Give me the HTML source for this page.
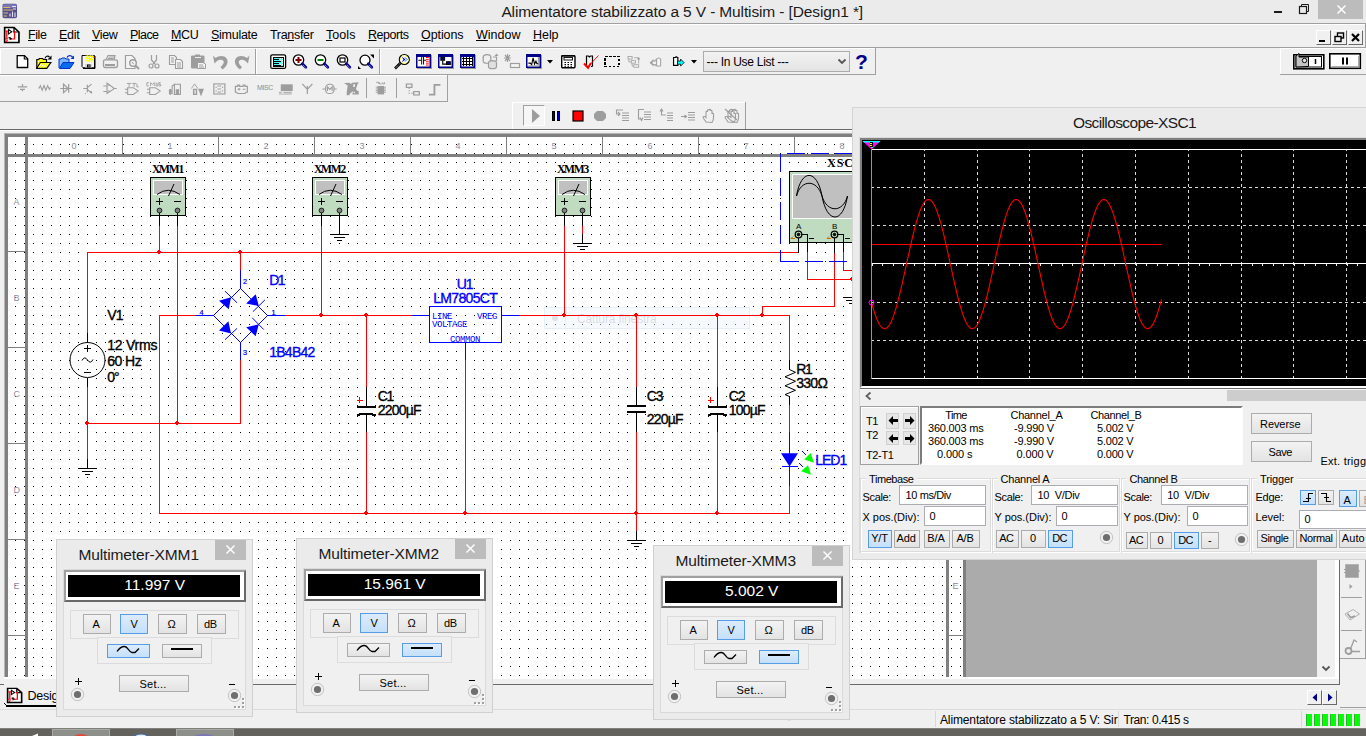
<!DOCTYPE html>
<html lang="en"><head><meta charset="utf-8"><title>Alimentatore stabilizzato a 5 V - Multisim - [Design1 *]</title>
<style>
html,body{margin:0;padding:0;}
body{width:1366px;height:736px;overflow:hidden;background:#f0f0f0;position:relative;font-family:"Liberation Sans",sans-serif;}
#root{position:absolute;left:0;top:0;width:1366px;height:736px;overflow:hidden;}
#root div,#root svg.a,.t{position:absolute;box-sizing:border-box;}
.t{white-space:pre;margin:0;}
u{text-decoration:underline;text-underline-offset:1px;}
.sec{position:absolute;left:0;top:0;width:1366px;height:736px;display:block;}
#root .sec{pointer-events:none;}

.b3{border:1px solid;border-color:#fff #696969 #696969 #fff;background:#f0f0f0;}

.grid{background-color:#fff;background-image:repeating-linear-gradient(to right,transparent 0,transparent 1px,#fff 1px,#fff 9px),repeating-linear-gradient(to bottom,#000 0,#000 1px,#fff 1px,#fff 9px);}
.sch{-webkit-text-stroke:0.25px currentColor;}

.btn{border:1px solid #acacac;background:linear-gradient(#f3f3f3,#e3e3e3);}
.btn.sel{border-color:#569de5;background:linear-gradient(#dcecfc,#c4e0fa);}
.inp{border:1px solid #abadb3;background:#fff;}
.grp{border:1px solid #dcdcdc;box-shadow:inset 1px 1px 0 #fff,1px 1px 0 #fff;}

</style></head>
<body>
<div id="root">
<header class="sec" id="app-chrome" aria-label="Title bar, menu bar and toolbars">
<div style="left:0px;top:0px;width:1366px;height:23px;background:#ebebeb;"></div>
<svg class="a" style="left:2px;top:3px" width="18" height="17" viewBox="0 0 18 17" ><rect x="0.500" y="0.800" width="14.500" height="14.500" rx="1.800" fill="#54508e"/><rect x="1" y="1.200" width="13.500" height="4" rx="1.500" fill="#7a78b4"/><path d="M1.500,4.500H8M1.500,7H11M1.500,10H6M1.500,13H5" stroke="#e0b868" stroke-width="1"/><path d="M8,13.500V10.500M10.500,14V8.500M13,14V9.500M10,3.500H14M11,6H14" stroke="#e4e0f0" stroke-width="1.100"/></svg>
<span class="t" style="left:501.4px;top:1.50px;font:normal 15.5px/20px 'Liberation Sans',sans-serif;color:#1a1a1a;letter-spacing:-0.127px;">Alimentatore stabilizzato a 5 V - Multisim - [Design1 *]</span>
<div style="left:1274px;top:11px;width:8px;height:2px;background:#1a1a1a;"></div>
<svg class="a" style="left:1298px;top:3px" width="13" height="13" viewBox="0 0 13 13" ><path d="M3.500,3.500V1.500H10.500V8.500H8.500" fill="none" stroke="#1a1a1a" stroke-width="1"/><rect x="1.500" y="3.500" width="7" height="7" fill="none" stroke="#1a1a1a" stroke-width="1.200"/></svg>
<div style="left:1318px;top:0px;width:45px;height:19px;background:#bcbcbc;"></div>
<svg class="a" style="left:1336px;top:4px" width="11" height="11" viewBox="0 0 11 11" ><path d="M1.500,1.500L9.500,9.500M9.500,1.500L1.500,9.500" stroke="#fff" stroke-width="1.500"/></svg>
<div style="left:0px;top:23px;width:1366px;height:1px;background:#a0a0a0;"></div>
<div style="left:0px;top:24px;width:1366px;height:1px;background:#fff;"></div>
<div style="left:0px;top:47px;width:1366px;height:1px;background:#a0a0a0;"></div>
<svg class="a" style="left:3px;top:26px" width="18" height="18" viewBox="0 0 18 18" ><g transform="scale(1.100,1)"><path d="M1.500,1.500H10L14.500,6V16.500H1.500Z" fill="#fff" stroke="#000" stroke-width="1.500"/><path d="M10,1.500V6H14.500" fill="none" stroke="#000" stroke-width="1.200"/><path d="M2,5H5M9,6H10.500V13H7M3.500,5V13M2,13H4.500M3,16L4,14" stroke="#f00" stroke-width="1.200" fill="none"/><path d="M5,3.500V8L8,5.800ZM5,11.500L8,13M6.500,11V14" stroke="#000" stroke-width="1" fill="#fff"/></g></svg>
<span class="t" style="left:28px;top:27.00px;font:normal 12.5px/16px 'Liberation Sans',sans-serif;color:#000;letter-spacing:-0.410px;"><u>F</u>ile</span>
<span class="t" style="left:59px;top:27.00px;font:normal 12.5px/16px 'Liberation Sans',sans-serif;color:#000;letter-spacing:-0.260px;"><u>E</u>dit</span>
<span class="t" style="left:92px;top:27.00px;font:normal 12.5px/16px 'Liberation Sans',sans-serif;color:#000;letter-spacing:-0.342px;"><u>V</u>iew</span>
<span class="t" style="left:130px;top:27.00px;font:normal 12.5px/16px 'Liberation Sans',sans-serif;color:#000;letter-spacing:-0.554px;"><u>P</u>lace</span>
<span class="t" style="left:171px;top:27.00px;font:normal 12.5px/16px 'Liberation Sans',sans-serif;color:#000;letter-spacing:-0.322px;"><u>M</u>CU</span>
<span class="t" style="left:211px;top:27.00px;font:normal 12.5px/16px 'Liberation Sans',sans-serif;color:#000;letter-spacing:-0.267px;"><u>S</u>imulate</span>
<span class="t" style="left:270px;top:27.00px;font:normal 12.5px/16px 'Liberation Sans',sans-serif;color:#000;letter-spacing:-0.322px;">Tra<u>n</u>sfer</span>
<span class="t" style="left:326px;top:27.00px;font:normal 12.5px/16px 'Liberation Sans',sans-serif;color:#000;letter-spacing:0.064px;"><u>T</u>ools</span>
<span class="t" style="left:368px;top:27.00px;font:normal 12.5px/16px 'Liberation Sans',sans-serif;color:#000;letter-spacing:-0.467px;"><u>R</u>eports</span>
<span class="t" style="left:421px;top:27.00px;font:normal 12.5px/16px 'Liberation Sans',sans-serif;color:#000;letter-spacing:-0.083px;"><u>O</u>ptions</span>
<span class="t" style="left:476px;top:27.00px;font:normal 12.5px/16px 'Liberation Sans',sans-serif;color:#000;letter-spacing:0.007px;"><u>W</u>indow</span>
<span class="t" style="left:533px;top:27.00px;font:normal 12.5px/16px 'Liberation Sans',sans-serif;color:#000;letter-spacing:-0.052px;"><u>H</u>elp</span>
<div class="b3" style="left:1316px;top:30px;width:15px;height:15px;"></div>
<div class="b3" style="left:1332px;top:30px;width:15px;height:15px;"></div>
<div class="b3" style="left:1348px;top:30px;width:15px;height:15px;"></div>
<div style="left:1319px;top:40px;width:6px;height:2px;background:#000;"></div>
<svg class="a" style="left:1334px;top:32px" width="12" height="12" viewBox="0 0 12 12" ><rect x="3.500" y="1" width="6" height="5" fill="none" stroke="#000" stroke-width="1.400"/><rect x="1" y="4.500" width="6" height="5" fill="#f0f0f0" stroke="#000" stroke-width="1.400"/></svg>
<svg class="a" style="left:1350px;top:32px" width="12" height="12" viewBox="0 0 12 12" ><path d="M2,2L9,9M9,2L2,9" stroke="#000" stroke-width="2.200"/></svg>
<div style="left:1365px;top:24px;width:1px;height:24px;background:#a0a0a0;"></div>
<div style="left:0px;top:48px;width:875px;height:1px;background:#fff;"></div>
<div style="left:0px;top:74px;width:876px;height:1px;background:#a0a0a0;"></div>
<div style="left:875px;top:48px;width:1px;height:27px;background:#a0a0a0;"></div>
<div style="left:0px;top:48px;width:1px;height:26px;background:#fff;"></div>
<div style="left:255px;top:49px;width:1px;height:25px;background:#a0a0a0;"></div>
<div style="left:256px;top:49px;width:1px;height:25px;background:#fff;"></div>
<div style="left:379px;top:49px;width:1px;height:25px;background:#a0a0a0;"></div>
<div style="left:380px;top:49px;width:1px;height:25px;background:#fff;"></div>
<svg class="a" style="left:14px;top:53px" width="17" height="17" viewBox="0 0 17 17"><path d="M3.200,2.600H10.500L13.700,5.800V14.500H3.200Z" fill="#fff" stroke="#000" stroke-width="1.300"/><path d="M10.300,2.600V6H13.700" fill="none" stroke="#000" stroke-width="1.1" /></svg>
<svg class="a" style="left:36px;top:53px" width="17" height="17" viewBox="0 0 17 17"><path d="M0.800,15.300V6.500H2.500L3.500,5.500H6.500L7.500,6.500H10.500V9" fill="#ff0" stroke="#000" stroke-width="1.200"/><path d="M0.800,15.300L4.300,9.500H14.800L10.800,15.300Z" fill="#ff0" stroke="#000" stroke-width="1.200"/><path d="M2.500,14.500L5.500,10.500M5,14.500L8,10.500M7.500,14.500L10.500,10.500M2,9L4,7" stroke="#fff" stroke-width="1" fill="none"/><path d="M9,5.500C9.500,3 12,2.500 13.500,4" fill="none" stroke="#000" stroke-width="1.2" /><path d="M11.500,6.500H15.500V2.500Z" fill="#000" /></svg>
<svg class="a" style="left:58px;top:53px" width="17" height="17" viewBox="0 0 17 17"><path d="M1,15V6H3L4,5H7L8,6H11V9" fill="#7ab8ff" stroke="#0032c8" stroke-width="1"/><path d="M1.5,15.5L5,9.5H16L12,15.5Z" fill="#0a6cf0" stroke="#0032c8" stroke-width="1"/><path d="M9,4.5C10,2 13,2 14.5,4" fill="none" stroke="#0032c8" stroke-width="1.3" /><path d="M12.5,6H16V2.5Z" fill="#0032c8" /></svg>
<svg class="a" style="left:80px;top:53px" width="17" height="17" viewBox="0 0 17 17"><path d="M2,2.500H14.500V15H3.500L2,13.500Z" fill="#f4f4f4" stroke="#000" stroke-width="1"/><rect x="14" y="3" width="1.5" height="12.5" fill="#000"/><rect x="3" y="14.5" width="12" height="1.5" fill="#000"/><rect x="5.5" y="2.5" width="8" height="6" fill="#ff0"/><path d="M5.500,4.500L7.500,2.500M5.500,7.500L10.500,2.500M6.500,8.500L12.500,2.500M9.500,8.500L13.500,4.500M12,8.500L13.500,7" stroke="#fff" stroke-width="0.900"/><rect x="5" y="11" width="7" height="3.5" fill="#d8d8d8"/><rect x="7" y="11.5" width="3.5" height="3" fill="#000"/><rect x="8.5" y="12" width="1" height="2" fill="#c0c0c0"/><rect x="13.5" y="3.5" width="1" height="1.5" fill="#f00"/></svg>
<svg class="a" style="left:102px;top:53px" width="17" height="17" viewBox="0 0 17 17"><path d="M4,7L6,2.5H13L12,7Z" fill="#f4f4f4" stroke="#9d9d9d" stroke-width="1.2"/><path d="M1.5,8C1.5,7 2,6.8 3,6.8H13.5C15,6.8 15.5,7.5 15.5,8.5V12.5C15.5,13.5 15,14.5 13.5,14.5H3C2,14.5 1.5,13.5 1.5,12.5Z" fill="#f0f0f0" stroke="#9d9d9d" stroke-width="1.3"/><rect x="3" y="11" width="10" height="2" fill="#9d9d9d"/><path d="M6.5,4H12M6,5.5H11.5" fill="none" stroke="#9d9d9d" stroke-width="1" /></svg>
<svg class="a" style="left:124px;top:53px" width="17" height="17" viewBox="0 0 17 17"><path d="M1.5,2.5H8L11,5.5V15.5H1.5Z" fill="#f4f4f4" stroke="#9d9d9d" stroke-width="1.2"/><circle cx="9" cy="10" r="3.3" fill="#f0f0f0" stroke="#9d9d9d" stroke-width="1.4"/><path d="M11.5,12.5L15,16" fill="none" stroke="#9d9d9d" stroke-width="2" /><path d="M8,9L9.5,11" fill="none" stroke="#9d9d9d" stroke-width="1" /></svg>
<svg class="a" style="left:146px;top:53px" width="17" height="17" viewBox="0 0 17 17"><path d="M5.5,2V7L9,11M10.5,2V7L7,11" fill="none" stroke="#9d9d9d" stroke-width="1.2" /><circle cx="5" cy="13" r="2" fill="none" stroke="#9d9d9d" stroke-width="1.2"/><circle cx="11" cy="13" r="2" fill="none" stroke="#9d9d9d" stroke-width="1.2"/></svg>
<svg class="a" style="left:168px;top:53px" width="17" height="17" viewBox="0 0 17 17"><path d="M1.5,2.5H6.5L8.5,4.5V11.5H1.5Z" fill="#f4f4f4" stroke="#9d9d9d" stroke-width="1.1"/><path d="M7.5,6.5H12.5L14.5,8.5V15.5H7.5Z" fill="#f4f4f4" stroke="#9d9d9d" stroke-width="1.1"/><path d="M3,5H6M3,7H6M3,9H6M9,10H13M9,12H13M9,14H13" fill="none" stroke="#9d9d9d" stroke-width="1" /></svg>
<svg class="a" style="left:190px;top:53px" width="17" height="17" viewBox="0 0 17 17"><path d="M1,4C1,3 1.5,2.5 2.5,2.5H5V1.5H10V2.5H13C14,2.5 14.5,3 14.5,4V14C14.5,15 14,15.5 13,15.5H2.5C1.5,15.5 1,15 1,14Z" fill="#9d9d9d" /><rect x="5" y="4" width="6" height="1" fill="#f0f0f0"/><path d="M7.5,9.5H13L15.5,11V15.5H7.5Z" fill="#f4f4f4" stroke="#9d9d9d" stroke-width="1"/><path d="M9,12H13M9,14H14" fill="none" stroke="#9d9d9d" stroke-width="1" /></svg>
<svg class="a" style="left:212px;top:53px" width="17" height="17" viewBox="0 0 17 17"><path d="M1,2.5L2.5,10.5L4.8,8.3C6.5,6.5 10,6.2 11.5,8C12.5,9.5 11,12 8.5,14L10.5,16.5C15,13.5 17,8.5 14.5,5.2C12,2 6.5,2.5 3.5,5Z" fill="#9d9d9d" /></svg>
<svg class="a" style="left:234px;top:53px" width="17" height="17" viewBox="0 0 17 17"><path d="M15.5,2.5L14,10.5L11.7,8.3C10,6.5 6.5,6.2 5,8C4,9.5 5.5,12 8,14L6,16.5C1.5,13.5 -0.5,8.5 2,5.2C4.500,2 10,2.5 13,5Z" fill="#9d9d9d" /></svg>
<svg class="a" style="left:270px;top:53px" width="17" height="17" viewBox="0 0 17 17"><rect x="0.8" y="1.8" width="14.8" height="13.6" rx="1.5" fill="#fff" stroke="#000" stroke-width="1.3"/><rect x="3" y="4" width="11" height="10" fill="#000"/><rect x="4" y="5" width="9" height="8" fill="#5ff"/><path d="M4,6.5H9M4,8.5H11M4,10.5H9M4,12.5H11" stroke="#000" stroke-width="1" shape-rendering="crispEdges"/><path d="M10,5.5H13M10,7.5H13M12,9.5H13M10,11.5H13" stroke="#fff" stroke-width="1" stroke-dasharray="1 1"/></svg>
<svg class="a" style="left:292px;top:53px" width="17" height="17" viewBox="0 0 17 17"><circle cx="6.5" cy="7" r="5.2" fill="#fff" stroke="#000" stroke-width="1.3"/><rect x="5.5" y="4" width="2" height="6" fill="#800000"/><rect x="3.5" y="6" width="6" height="2" fill="#800000"/><path d="M10.300,10.800L13.800,14.300" stroke="#0a0a8c" stroke-width="2.800" stroke-linecap="round"/><path d="M11.300,12.400L12.100,13.200M12.600,13.700L13.200,14.300" stroke="#fff" stroke-width="0.800"/></svg>
<svg class="a" style="left:314px;top:53px" width="17" height="17" viewBox="0 0 17 17"><circle cx="6.5" cy="7" r="5.2" fill="#fff" stroke="#000" stroke-width="1.3"/><rect x="3.5" y="6" width="6" height="2" fill="#008000"/><path d="M10.300,10.800L13.800,14.300" stroke="#0a0a8c" stroke-width="2.800" stroke-linecap="round"/><path d="M11.300,12.400L12.100,13.200M12.600,13.700L13.200,14.300" stroke="#fff" stroke-width="0.800"/></svg>
<svg class="a" style="left:336px;top:53px" width="17" height="17" viewBox="0 0 17 17"><circle cx="6.5" cy="7" r="5.2" fill="#fff" stroke="#000" stroke-width="1.3"/><rect x="4" y="5" width="5" height="4" fill="#fff" stroke="#000" stroke-width="1.2"/><path d="M10.300,10.800L13.800,14.300" stroke="#0a0a8c" stroke-width="2.800" stroke-linecap="round"/><path d="M11.300,12.400L12.100,13.200M12.600,13.700L13.200,14.300" stroke="#fff" stroke-width="0.800"/></svg>
<svg class="a" style="left:358px;top:53px" width="17" height="17" viewBox="0 0 17 17"><circle cx="7" cy="7.2" r="5" fill="#fff" stroke="#000" stroke-width="1.3"/><path d="M10.300,10.800L13.800,14.300" stroke="#0a0a8c" stroke-width="2.800" stroke-linecap="round"/><path d="M11.300,12.400L12.100,13.200M12.600,13.700L13.200,14.300" stroke="#fff" stroke-width="0.800"/><path d="M12,1.5H16V5.5Z" fill="#000" /><path d="M0,13V16H3Z" fill="#000" /></svg>
<svg class="a" style="left:394px;top:53px" width="17" height="17" viewBox="0 0 17 17"><path d="M1,15.5L6.5,10" stroke="#000" stroke-width="2.6"/><path d="M1.3,15.2L6.2,10.3" stroke="#fff" stroke-width="0.9" stroke-dasharray="1 1"/><circle cx="10.3" cy="6.5" r="5" fill="#fff" stroke="#000" stroke-width="1.2"/><circle cx="10.3" cy="6.5" r="4" fill="none" stroke="#ff0" stroke-width="1" stroke-dasharray="2 2"/><path d="M7.5,3.5L11.5,6.5L7.5,9.5L9.5,6.5Z" fill="#00c" /><path d="M11,4.5L13,6.5L11,8.5" fill="none" stroke="#06f" stroke-width="1" /></svg>
<svg class="a" style="left:416px;top:53px" width="17" height="17" viewBox="0 0 17 17"><rect x="1" y="2" width="15" height="14" fill="#9a9a9a"/><rect x="0.750" y="1.750" width="13.500" height="12.500" fill="#fff" stroke="#00008b" stroke-width="1.500"/><rect x="0" y="1" width="15" height="3" fill="#00008b"/><g transform="translate(-0.500,-0.800) scale(0.950,0.950)"><rect x="6" y="5" width="1" height="8" fill="#000"/><rect x="8" y="5" width="1" height="8" fill="#000"/><rect x="3" y="8" width="3" height="1" fill="#000"/><rect x="9" y="8" width="2" height="1" fill="#000"/><rect x="11" y="5" width="3" height="1" fill="#f00"/><rect x="11" y="7" width="3" height="1" fill="#f00"/><rect x="11" y="9" width="3" height="1" fill="#f00"/><rect x="11" y="11" width="3" height="1" fill="#f00"/><rect x="11" y="13" width="3" height="1" fill="#f00"/></g></svg>
<svg class="a" style="left:438px;top:53px" width="17" height="17" viewBox="0 0 17 17"><rect x="1" y="2" width="15" height="14" fill="#9a9a9a"/><rect x="0.750" y="1.750" width="13.500" height="12.500" fill="#fff" stroke="#00008b" stroke-width="1.500"/><rect x="0" y="1" width="15" height="3" fill="#00008b"/><g transform="translate(-0.500,-0.800) scale(0.950,0.950)"><rect x="3.5" y="5.500" width="4" height="3" fill="#00008b" stroke="#000" stroke-width="1"/><rect x="9.500" y="10" width="4" height="3" fill="#00008b" stroke="#000" stroke-width="1"/><path d="M5.5,9V12.5H9" fill="none" stroke="#000" stroke-width="1.2" /></g></svg>
<svg class="a" style="left:460px;top:53px" width="17" height="17" viewBox="0 0 17 17"><rect x="1" y="2" width="15" height="14" fill="#9a9a9a"/><rect x="0.750" y="1.750" width="13.500" height="12.500" fill="#fff" stroke="#00008b" stroke-width="1.500"/><rect x="0" y="1" width="15" height="3" fill="#00008b"/><g transform="translate(-0.500,-0.800) scale(0.950,0.950)"><path d="M3,6.5H14M3,9.5H14M3,12.5H14M4.5,5V14M7.5,5V14M10.5,5V14M13.5,5V14" stroke="#000" stroke-width="1.2" shape-rendering="crispEdges"/></g></svg>
<svg class="a" style="left:482px;top:53px" width="17" height="17" viewBox="0 0 17 17"><ellipse cx="5" cy="4" rx="3.800" ry="2.300" fill="#f0f0f0" stroke="#9d9d9d" stroke-width="1.2"/><path d="M1.2,4V8C1.2,11 8.800,11 8.800,8V4" fill="#f0f0f0" stroke="#9d9d9d" stroke-width="1.2"/><ellipse cx="10.5" cy="10" rx="4" ry="2.300" fill="#e0e0e0" stroke="#9d9d9d" stroke-width="1.2"/><path d="M6.5,10V13.5C6.500,16.500 14.500,16.500 14.5,13.5V10" fill="#e0e0e0" stroke="#9d9d9d" stroke-width="1.2"/><path d="M11,4H14.5V8" fill="none" stroke="#9d9d9d" stroke-width="1.2" /><path d="M12.5,3L14.500,0.5L16.500,3Z" fill="#9d9d9d" /></svg>
<svg class="a" style="left:504px;top:53px" width="17" height="17" viewBox="0 0 17 17"><path d="M3.5,1V9M0,5H7M1,2L6,8M6,2L1,8" fill="none" stroke="#9d9d9d" stroke-width="1.2" /><rect x="6.5" y="10.5" width="9" height="4" fill="#f4f4f4" stroke="#9d9d9d" stroke-width="1.2"/></svg>
<svg class="a" style="left:526px;top:53px" width="17" height="17" viewBox="0 0 17 17"><rect x="1" y="2" width="15" height="14" fill="#9a9a9a"/><rect x="0.750" y="1.750" width="13.500" height="12.500" fill="#fff" stroke="#00008b" stroke-width="1.500"/><rect x="0" y="1" width="15" height="3" fill="#00008b"/><g transform="translate(-0.500,-0.800) scale(0.950,0.950)"><path d="M3,11.500H5L6.500,13L8,6L9.500,12.500L11,9.5L12,12H13.5" fill="none" stroke="#000" stroke-width="1.2" /><path d="M3,14.5H14" fill="none" stroke="#808080" stroke-width="1" /><path d="M13.5,5V14" fill="none" stroke="#808080" stroke-width="1" /></g></svg>
<svg class="a" style="left:547px;top:60px" width="7" height="5" viewBox="0 0 7 5"><path d="M0,0H6L3,3.500Z" fill="#000" /></svg>
<svg class="a" style="left:561px;top:53px" width="17" height="17" viewBox="0 0 17 17"><rect x="0.700" y="2.700" width="13.300" height="12" rx="1" fill="#fff" stroke="#000" stroke-width="1.400"/><rect x="0.5" y="2" width="13.5" height="1.5" fill="#000"/><rect x="3" y="4.500" width="8.500" height="2.500" fill="#fff" stroke="#000" stroke-width="0.900"/><path d="M3.500,9.500H5M6.500,9.500H8M9.500,9.500H11M3.500,11.500H5M6.500,11.500H8M9.500,11.500H11M3.500,13.300H5M6.500,13.300H8M9.500,13.300H11" stroke="#000" stroke-width="1.100"/></svg>
<svg class="a" style="left:583px;top:53px" width="17" height="17" viewBox="0 0 17 17"><path d="M3.500,13.500V3H5.500L6.500,4L7.500,3H9.500V13.500" fill="none" stroke="#000" stroke-width="1.2" /><path d="M3.500,13.500H5M8,13.500H9.500" fill="none" stroke="#000" stroke-width="1.2" /><path d="M1,10.500L5,14.800L8,10" stroke="#f00" stroke-width="2" fill="none"/><path d="M7,11.500L15.500,2.500" stroke="#f00" stroke-width="0.900" fill="none"/></svg>
<svg class="a" style="left:604px;top:53px" width="17" height="17" viewBox="0 0 17 17"><rect x="1" y="3.500" width="14" height="10" fill="none" stroke="#000" stroke-width="1.200" stroke-dasharray="2.500 1.500" shape-rendering="crispEdges"/></svg>
<svg class="a" style="left:626px;top:53px" width="17" height="17" viewBox="0 0 17 17"><g transform="translate(0.800,1.500) scale(0.820)"><rect x="1.5" y="2.5" width="5" height="3" fill="#f4f4f4" stroke="#9d9d9d"/><rect x="5.5" y="7.5" width="5" height="3" fill="#f4f4f4" stroke="#9d9d9d"/><rect x="8.500" y="12.500" width="6" height="3" fill="#f4f4f4" stroke="#9d9d9d"/><path d="M2.5,6V9H5M6.5,11V14H8M9,4H14.500V11" fill="none" stroke="#9d9d9d" stroke-width="1" /><path d="M12.5,6L14.500,3L16.500,6Z" fill="#9d9d9d" /></g></svg>
<svg class="a" style="left:648px;top:53px" width="17" height="17" viewBox="0 0 17 17"><g transform="translate(0.800,2) scale(0.820)"><path d="M1,9.5L6,5V8H8.500V5L4,9.5L8.500,14V11H6V14Z" fill="#9d9d9d" /><path d="M9.500,13.500V4.500H11L11.700,3.500H12.500L13.200,4.500H14.500V13.500Z" fill="#f4f4f4" stroke="#9d9d9d" stroke-width="1.2"/></g></svg>
<svg class="a" style="left:670px;top:53px" width="17" height="17" viewBox="0 0 17 17"><g transform="translate(2,1.800) scale(0.780)"><path d="M2,13.500V3.500H4.500L5,2.500H6L6.500,3.500H7.500V13.500Z" fill="#fff" stroke="#000" stroke-width="1.500"/><path d="M7,8H11V5.500L15.500,10L11,14.500V12H7Z" fill="#0ff" stroke="#000" stroke-width="1"/></g></svg>
<svg class="a" style="left:691px;top:60px" width="7" height="5" viewBox="0 0 7 5"><path d="M0,0H6L3,3.500Z" fill="#000" /></svg>
<div style="left:703px;top:51px;width:147px;height:21px;border:1px solid #acacac;background:linear-gradient(#f2f2f2,#e4e4e4);"></div>
<span class="t" style="left:706.5px;top:53.70px;font:normal 12px/16px 'Liberation Sans',sans-serif;color:#000;letter-spacing:-0.281px;">--- In Use List ---</span>
<svg class="a" style="left:837px;top:58px" width="10" height="8" viewBox="0 0 10 8" ><path d="M1.500,1.500L5,5L8.500,1.500" fill="none" stroke="#555" stroke-width="1.800"/></svg>
<span class="t" style="left:855px;top:48.00px;font:bold 21px/27px 'Liberation Sans',sans-serif;color:#00008b;">?</span>
<div style="left:0px;top:75px;width:447px;height:1px;background:#fff;"></div>
<div style="left:0px;top:101px;width:448px;height:1px;background:#a0a0a0;"></div>
<div style="left:447px;top:75px;width:1px;height:27px;background:#a0a0a0;"></div>
<svg class="a" style="left:14px;top:79px" width="18" height="18" viewBox="0 0 18 18"><g transform="translate(0,2.800) scale(0.920,0.840)"><path d="M9.200,2.600V6M4.100,6H14.300M6.500,9H11.900M9.200,9V11.300" fill="none" stroke="#9d9d9d" stroke-width="1.3" /></g></svg>
<svg class="a" style="left:36px;top:79px" width="18" height="18" viewBox="0 0 18 18"><g transform="translate(0,2.800) scale(0.920,0.840)"><path d="M2.300,7.500H3.500L4.700,4.500L6.700,10L8.700,4.500L10.700,10L12.700,4.500L14.500,9L15,7.500H16.300" fill="none" stroke="#9d9d9d" stroke-width="1.2" /></g></svg>
<svg class="a" style="left:58px;top:79px" width="18" height="18" viewBox="0 0 18 18"><g transform="translate(0,2.800) scale(0.920,0.840)"><path d="M2.400,8H15.100M6,2.700V13L11,8ZM11.600,2.700V13" fill="none" stroke="#9d9d9d" stroke-width="1.3" /></g></svg>
<svg class="a" style="left:80px;top:79px" width="18" height="18" viewBox="0 0 18 18"><g transform="translate(0,2.800) scale(0.920,0.840)"><path d="M3.600,8H8M8,3.500V12.500M8,7L12.500,2.700M8,9L12.500,13.500M10,11.500H12.500M12.500,11.500V14M5.500,14H6.500" fill="none" stroke="#9d9d9d" stroke-width="1.3" /></g></svg>
<svg class="a" style="left:102px;top:79px" width="18" height="18" viewBox="0 0 18 18"><g transform="translate(0,2.800) scale(0.920,0.840)"><path d="M1.400,5H5.500M1.400,11.500H5.500M5.500,1.500V14L13.500,8ZM13.500,8H16M6.500,4H8.500M7.500,10V12.500" fill="none" stroke="#9d9d9d" stroke-width="1.2" /></g></svg>
<svg class="a" style="left:124px;top:79px" width="18" height="18" viewBox="0 0 18 18"><g transform="translate(0,2.800) scale(0.920,0.840)"><path d="M3,2H8M5.500,2V6M9,2H13M11,2V6M14,2V6H16" fill="none" stroke="#9d9d9d" stroke-width="1" /><path d="M1,9H4M1,13H4M4,7V15H10L15.500,11L10,7Z" fill="none" stroke="#9d9d9d" stroke-width="1.2" /></g></svg>
<svg class="a" style="left:146px;top:79px" width="18" height="18" viewBox="0 0 18 18"><g transform="translate(0,2.800) scale(0.920,0.840)"><path d="M3,1H1V5H3M5,5V1L7,3L9,1V5M11,1V5H13V1M16,1H14V3H16V5H14" fill="none" stroke="#9d9d9d" stroke-width="1" /><path d="M1,9H4M1,13H4M4,7V15H10L15.500,11L10,7Z" fill="none" stroke="#9d9d9d" stroke-width="1.2" /></g></svg>
<svg class="a" style="left:168px;top:79px" width="18" height="18" viewBox="0 0 18 18"><g transform="translate(0,2.800) scale(0.920,0.840)"><path d="M1,10C1,8 4,8 4,10V14C4,16 1,16 1,14Z" fill="#9d9d9d" /><path d="M4.500,14.500V5L7,3V14.500M7,3H13.500V14.500M9,9V15M11,9V15M6,15H14" fill="none" stroke="#9d9d9d" stroke-width="1.2" /><rect x="9" y="9" width="3" height="6" fill="#9d9d9d"/></g></svg>
<svg class="a" style="left:190px;top:79px" width="18" height="18" viewBox="0 0 18 18"><g transform="translate(0,2.800) scale(0.920,0.840)"><path d="M1.500,8L5,2.500L8.500,8" fill="none" stroke="#9d9d9d" stroke-width="1" /><path d="M4,9H7V15H4ZM9,9H15M10,9L12,15L14,9M12,9V15" fill="none" stroke="#9d9d9d" stroke-width="1.6" /></g></svg>
<svg class="a" style="left:212px;top:79px" width="18" height="18" viewBox="0 0 18 18"><g transform="translate(0,2.800) scale(0.920,0.840)"><rect x="2" y="2.500" width="12" height="12" fill="none" stroke="#9d9d9d" stroke-width="1.300"/><path d="M6,5H10M6,8.500H10M6,12H10M4.500,6V7.500M4.500,10V11.500M11.500,6V7.500M11.500,10V11.500" fill="none" stroke="#9d9d9d" stroke-width="1.2" /></g></svg>
<svg class="a" style="left:234px;top:79px" width="18" height="18" viewBox="0 0 18 18"><g transform="translate(0,2.800) scale(0.920,0.840)"><path d="M1.500,5.500H4V4H6V5.500H10V4H12V5.500H14.500V12.500H13L12,14H4L3,12.500H1.500Z" fill="none" stroke="#9d9d9d" stroke-width="1.300"/><path d="M4,9H7M5.500,7.500V10.500M9.500,9H12.500" fill="none" stroke="#9d9d9d" stroke-width="1.2" /></g></svg>
<svg class="a" style="left:278px;top:79px" width="18" height="18" viewBox="0 0 18 18"><g transform="translate(0,2.800) scale(0.920,0.840)"><rect x="3" y="3" width="13" height="8" fill="#9d9d9d"/><rect x="1" y="12" width="14" height="1" fill="#9d9d9d"/><rect x="1" y="14" width="14" height="1" fill="#9d9d9d"/><rect x="4" y="12" width="2" height="2" fill="#f0f0f0"/></g></svg>
<svg class="a" style="left:300px;top:79px" width="18" height="18" viewBox="0 0 18 18"><g transform="translate(0,2.800) scale(0.920,0.840)"><path d="M8,14.500V5M8,9L2.500,2.500M8,9L13.500,2.500" fill="none" stroke="#9d9d9d" stroke-width="1.3" /></g></svg>
<svg class="a" style="left:322px;top:79px" width="18" height="18" viewBox="0 0 18 18"><g transform="translate(0,2.800) scale(0.920,0.840)"><rect x="4" y="3" width="9" height="11" rx="4" fill="none" stroke="#9d9d9d" stroke-width="1.300"/><path d="M0.500,8.500H4M13,8.500H16M6,11V6L8.500,9L11,6V11" fill="none" stroke="#9d9d9d" stroke-width="1.2" /></g></svg>
<svg class="a" style="left:344px;top:79px" width="18" height="18" viewBox="0 0 18 18"><g transform="translate(0,2.800) scale(0.920,0.840)"><path d="M0,1.500L6,1L7.500,2.500L9,1L16,0.500L14.500,3.500L13,9L15,11H16V15H9L10,11L7,13.500L5.500,16H3V12L4,4.500Z" fill="#9d9d9d" /><rect x="10" y="3" width="2" height="3" fill="#f0f0f0"/><rect x="10.5" y="12" width="1.5" height="1.5" fill="#f0f0f0"/></g></svg>
<span class="t" style="left:257px;top:83.30px;font:normal 7px/9px 'Liberation Sans',sans-serif;color:#8c8c8c;letter-spacing:-0.375px;">MISC</span>
<div style="left:366px;top:78px;width:1px;height:20px;background:#a0a0a0;"></div>
<div style="left:396px;top:78px;width:1px;height:20px;background:#a0a0a0;"></div>
<svg class="a" style="left:373px;top:79px" width="18" height="18" viewBox="0 0 18 18"><g transform="translate(0,2.800) scale(0.920,0.840)"><path d="M4,1.500V0.500H6V2.500M7,0.500V2.500H9.500M10.500,0.500V2.500H12.500V0.500" fill="none" stroke="#9d9d9d" stroke-width="1" /><rect x="5" y="5" width="7" height="10" fill="#9d9d9d"/><path d="M3,6.500H14M3,8.500H14M3,10.500H14M3,12.500H14" fill="none" stroke="#9d9d9d" stroke-width="1" /></g></svg>
<svg class="a" style="left:405px;top:80px" width="18" height="18" viewBox="0 0 18 18"><g transform="translate(0,2.800) scale(0.920,0.840)"><rect x="1.500" y="1.500" width="6" height="4" fill="none" stroke="#9d9d9d" stroke-width="1.400"/><rect x="9.500" y="10.500" width="6" height="4" fill="none" stroke="#9d9d9d" stroke-width="1.400"/><path d="M4.500,6V12.500H9" fill="none" stroke="#9d9d9d" stroke-width="1.2" stroke-dasharray="1.500 1.500"/></g></svg>
<svg class="a" style="left:428px;top:80px" width="18" height="18" viewBox="0 0 18 18"><g transform="translate(0,2.800) scale(0.920,0.840)"><path d="M1,14H7V2.500H13.500" fill="none" stroke="#9d9d9d" stroke-width="2" /></g></svg>
<div style="left:512px;top:102px;width:233px;height:1px;background:#fff;"></div>
<div style="left:512px;top:102px;width:1px;height:27px;background:#fff;"></div>
<div style="left:745px;top:102px;width:1px;height:27px;background:#a0a0a0;"></div>
<div style="left:523px;top:105px;width:22px;height:21px;background:#f6f6f6;border:1px solid;border-color:#a0a0a0 #fff #fff #a0a0a0;"></div>
<svg class="a" style="left:530px;top:108px" width="17" height="17" viewBox="0 0 17 17"><path d="M2,1L10,8L2,15Z" fill="#9d9d9d" /></svg>
<svg class="a" style="left:550px;top:108px" width="17" height="17" viewBox="0 0 17 17"><rect x="2" y="3" width="3" height="10" fill="#000"/><rect x="3" y="4" width="1" height="8" fill="#00c"/><rect x="7" y="3" width="3" height="10" fill="#000"/><rect x="8" y="4" width="1" height="8" fill="#00c"/></svg>
<svg class="a" style="left:571px;top:108px" width="17" height="17" viewBox="0 0 17 17"><rect x="2" y="3" width="10" height="10" fill="#f00" stroke="#000" stroke-width="1.200"/></svg>
<svg class="a" style="left:592px;top:108px" width="17" height="17" viewBox="0 0 17 17"><path d="M5,3H11L14,6V10L11,13H5L2,10V6Z" fill="#9d9d9d" /></svg>
<svg class="a" style="left:614px;top:107px" width="17" height="17" viewBox="0 0 17 17"><path d="M9,3H2.500V7H5.500M4,5L6,7L4,9" fill="none" stroke="#9d9d9d" stroke-width="1.1" /><path d="M8,6H15M8,8.500H15M8,11H15M8,13.500H15" fill="none" stroke="#9d9d9d" stroke-width="1" /></svg>
<svg class="a" style="left:636px;top:107px" width="17" height="17" viewBox="0 0 17 17"><path d="M8,2.500H2.500V12H5.500M4,10.500L5.500,13.500L7,10.500" fill="none" stroke="#9d9d9d" stroke-width="1.1" /><path d="M8,5H15M8,7.500H15M8,10H15M8,12.500H15" fill="none" stroke="#9d9d9d" stroke-width="1" /></svg>
<svg class="a" style="left:658px;top:107px" width="17" height="17" viewBox="0 0 17 17"><path d="M3.500,3V8H8M2,4.500L3.500,2L5,4.500" fill="none" stroke="#9d9d9d" stroke-width="1.1" /><path d="M9,6H15M9,8.500H15M9,11H15M9,13.500H15" fill="none" stroke="#9d9d9d" stroke-width="1" /></svg>
<svg class="a" style="left:680px;top:107px" width="17" height="17" viewBox="0 0 17 17"><path d="M1,9.500H6M4.500,8L6.500,9.500L4.500,11" fill="none" stroke="#9d9d9d" stroke-width="1.1" /><path d="M8,5.500H15M8,8H15M8,10.500H15M8,13H15" fill="none" stroke="#9d9d9d" stroke-width="1" /></svg>
<svg class="a" style="left:702px;top:107px" width="17" height="17" viewBox="0 0 17 17"><path d="M4,15C3,13 1,11.500 1,10C1.500,9 3,9.500 4,10.500V5C4,4 5.500,4 5.500,5V3.500C5.500,2.500 7,2.500 7,3.500V3C7,2 8.500,2 8.500,3V4C8.500,3 10,3 10,4V7C10,6 11.500,6 11.500,7V11C11.500,13 11,14 10,15.500Z" fill="none" stroke="#9d9d9d" stroke-width="1.100"/></svg>
<svg class="a" style="left:724px;top:107px" width="17" height="17" viewBox="0 0 17 17"><path d="M7,15C3,13 1,11.500 1,10C1.500,9 3,9.500 4,10.500V5C4,4 5.500,4 5.500,5V3.500C5.500,2.500 7,2.500 7,3.500V3C7,2 8.500,2 8.500,3V4C8.500,3 10,3 10,4V7C10,6 11.500,6 11.500,7V11C11.500,13 11,14 10,15.500Z" fill="none" transform="translate(3,0)" stroke="#9d9d9d" stroke-width="1.100"/><path d="M4,15C3,13 1,11.500 1,10C1.500,9 3,9.500 4,10.500V5C4,4 5.500,4 5.500,5V3.500C5.500,2.500 7,2.500 7,3.500V3C7,2 8.500,2 8.500,3V4C8.500,3 10,3 10,4V7C10,6 11.500,6 11.500,7V11C11.500,13 11,14 10,15.500Z" fill="none" stroke="#9d9d9d" stroke-width="1.100"/><path d="M1,2L13,13" fill="none" stroke="#9d9d9d" stroke-width="1.2" /></svg>
<div style="left:1280px;top:48px;width:86px;height:1px;background:#fff;"></div>
<div style="left:1280px;top:48px;width:1px;height:26px;background:#fff;"></div>
<div style="left:1280px;top:74px;width:86px;height:1px;background:#a0a0a0;"></div>
<svg class="a" style="left:1293px;top:53px" width="32" height="17" viewBox="0 0 32 17" ><rect x="0.800" y="1.800" width="30" height="14" fill="#fff" stroke="#000" stroke-width="1.600"/><rect x="3" y="3.500" width="25.500" height="10.500" fill="none" stroke="#000" stroke-width="1"/><path d="M3,14V3L6,0.500V4H15.500V13.500Z" fill="#c4c4c4" stroke="#000" stroke-width="1"/><circle cx="11.500" cy="7.500" r="2.200" fill="#e8e8e8" stroke="#000" stroke-width="1"/><path d="M22.500,6V11" stroke="#000" stroke-width="1.500"/></svg>
<svg class="a" style="left:1329px;top:53px" width="33" height="17" viewBox="0 0 33 17" ><rect x="0.800" y="0.800" width="30.500" height="14.500" fill="#fff" stroke="#000" stroke-width="1.600"/><path d="M2.500,14H30V3" fill="none" stroke="#909090" stroke-width="1.500"/><path d="M14,4.500V11.500M18,4.500V11.500" stroke="#000" stroke-width="2"/></svg>
<div style="left:0px;top:129px;width:852px;height:1px;background:#696969;"></div>
<div style="left:0px;top:130px;width:852px;height:1px;background:#fff;"></div>
</header>
<main class="sec" id="design-canvas" aria-label="Schematic design sheet">
<div style="left:4px;top:133px;width:1335px;height:546px;background:#fff;"></div>
<div style="left:4px;top:133px;width:1331px;height:4px;background:#808080;"></div>
<div style="left:4px;top:133px;width:4px;height:544px;background:#808080;"></div>
<div style="left:4px;top:133px;width:1331px;height:1px;background:#b4b4b4;"></div>
<div style="left:4px;top:133px;width:1px;height:544px;background:#b4b4b4;"></div>
<div class="grid" style="left:8px;top:137px;width:1327px;height:540px;background-position:-2px -2px;"></div>
<div style="left:25px;top:137px;width:3px;height:540px;background:#808080;"></div>
<div style="left:8px;top:154px;width:1327px;height:3px;background:#808080;"></div>
<div style="left:1317px;top:560px;width:18px;height:117px;background:#f0f0f0;"></div>
<svg class="a" style="left:1321px;top:665px" width="10" height="8" viewBox="0 0 10 8" ><path d="M1.500,1.500L5,5L8.500,1.500" fill="none" stroke="#555" stroke-width="1.800"/></svg>
<div style="left:122px;top:137px;width:1px;height:17px;background:#808080;"></div>
<span class="t" style="left:71.5px;top:140.00px;font:normal 9px/12px 'Liberation Sans',sans-serif;color:#8c8c9c;">0</span>
<div style="left:218px;top:137px;width:1px;height:17px;background:#808080;"></div>
<span class="t" style="left:167.5px;top:140.00px;font:normal 9px/12px 'Liberation Sans',sans-serif;color:#8c8c9c;">1</span>
<div style="left:314px;top:137px;width:1px;height:17px;background:#808080;"></div>
<span class="t" style="left:263.5px;top:140.00px;font:normal 9px/12px 'Liberation Sans',sans-serif;color:#8c8c9c;">2</span>
<div style="left:410px;top:137px;width:1px;height:17px;background:#808080;"></div>
<span class="t" style="left:359.5px;top:140.00px;font:normal 9px/12px 'Liberation Sans',sans-serif;color:#8c8c9c;">3</span>
<div style="left:506px;top:137px;width:1px;height:17px;background:#808080;"></div>
<span class="t" style="left:455.5px;top:140.00px;font:normal 9px/12px 'Liberation Sans',sans-serif;color:#8c8c9c;">4</span>
<div style="left:602px;top:137px;width:1px;height:17px;background:#808080;"></div>
<span class="t" style="left:551.5px;top:140.00px;font:normal 9px/12px 'Liberation Sans',sans-serif;color:#8c8c9c;">5</span>
<div style="left:698px;top:137px;width:1px;height:17px;background:#808080;"></div>
<span class="t" style="left:647.5px;top:140.00px;font:normal 9px/12px 'Liberation Sans',sans-serif;color:#8c8c9c;">6</span>
<div style="left:794px;top:137px;width:1px;height:17px;background:#808080;"></div>
<span class="t" style="left:743.5px;top:140.00px;font:normal 9px/12px 'Liberation Sans',sans-serif;color:#8c8c9c;">7</span>
<div style="left:890px;top:137px;width:1px;height:17px;background:#808080;"></div>
<span class="t" style="left:839.5px;top:140.00px;font:normal 9px/12px 'Liberation Sans',sans-serif;color:#8c8c9c;">8</span>
<div style="left:8px;top:251px;width:17px;height:1px;background:#808080;"></div>
<span class="t" style="left:13.5px;top:196.00px;font:normal 9px/12px 'Liberation Sans',sans-serif;color:#8c8c9c;">A</span>
<div style="left:8px;top:347px;width:17px;height:1px;background:#808080;"></div>
<span class="t" style="left:13.5px;top:292.00px;font:normal 9px/12px 'Liberation Sans',sans-serif;color:#8c8c9c;">B</span>
<div style="left:8px;top:443px;width:17px;height:1px;background:#808080;"></div>
<span class="t" style="left:13.5px;top:388.00px;font:normal 9px/12px 'Liberation Sans',sans-serif;color:#8c8c9c;">C</span>
<div style="left:8px;top:539px;width:17px;height:1px;background:#808080;"></div>
<span class="t" style="left:13.5px;top:484.00px;font:normal 9px/12px 'Liberation Sans',sans-serif;color:#8c8c9c;">D</span>
<div style="left:8px;top:635px;width:17px;height:1px;background:#808080;"></div>
<span class="t" style="left:13.5px;top:580.00px;font:normal 9px/12px 'Liberation Sans',sans-serif;color:#8c8c9c;">E</span>
<div style="left:946px;top:558px;width:3px;height:119px;background:#808080;"></div>
<div style="left:963px;top:558px;width:3px;height:119px;background:#808080;"></div>
<div style="left:949px;top:635px;width:14px;height:1px;background:#808080;"></div>
<span class="t" style="left:952.5px;top:580.00px;font:normal 9px/12px 'Liberation Sans',sans-serif;color:#8c8c9c;">E</span>
<div style="left:966px;top:558px;width:351px;height:119px;background:#ababab;"></div>
<div style="left:544px;top:307px;width:206px;height:22px;background:rgba(236,243,252,0.45);border:1px solid rgba(210,228,245,0.45);"></div>
<div style="left:565px;top:308px;width:1px;height:20px;background:rgba(215,230,245,0.5);"></div>
<div style="left:552px;top:315px;width:6px;height:6px;background:rgba(170,170,170,0.30);border-radius:3px;"></div>
<span class="t" style="left:577px;top:311.00px;font:normal 12px/16px 'Liberation Sans',sans-serif;color:rgba(120,125,135,0.25);letter-spacing:-0.159px;">Cattura finestra</span>
<svg class="a" style="left:0;top:0" width="1366" height="736" viewBox="0 0 1366 736" shape-rendering="crispEdges"><rect x="789.500" y="171.500" width="70" height="71" fill="#c0dcc0" stroke="#000"/><rect x="792.500" y="174.500" width="64" height="44" fill="#c0c0c0" stroke="#fff"/><g shape-rendering="auto" fill="none" stroke="#000"><path d="M796.500,196C801,168.500 817,168.500 822,196C827,224 843,224 847.500,196"/><path d="M796.500,196C801,179 817,179 822,196C827,213 843,213 847.500,196"/><circle cx="798.500" cy="234.500" r="3.300" stroke-width="1.300"/><circle cx="798.500" cy="234.500" r="1.300" fill="#000"/><circle cx="834.500" cy="234.500" r="3.300" stroke-width="1.300"/><circle cx="834.500" cy="234.500" r="1.300" fill="#000"/><path d="M791,238.500H795M791,238.500L793,236.500M827,238.500H831M827,238.500L829,236.500" stroke="#c07000"/></g><rect x="87" y="252" width="712" height="1" fill="#ff0000"/><rect x="87" y="252" width="1" height="82" fill="#ff0000"/><rect x="87" y="333" width="1" height="10" fill="#000000"/><rect x="87" y="378" width="1" height="10" fill="#000000"/><rect x="87" y="387" width="1" height="73" fill="#ff0000"/><rect x="87" y="459" width="1" height="10" fill="#000000"/><rect x="78" y="468" width="19" height="1" fill="#000000"/><rect x="82" y="471" width="11" height="1" fill="#000000"/><rect x="85" y="474" width="5" height="1" fill="#000000"/><rect x="159" y="225" width="1" height="28" fill="#ff0000"/><rect x="177" y="225" width="1" height="199" fill="#ff0000"/><rect x="87" y="423" width="154" height="1" fill="#ff0000"/><rect x="240" y="252" width="1" height="19" fill="#ff0000"/><rect x="240" y="270" width="1" height="19" fill="#0000ff"/><rect x="240" y="342" width="1" height="19" fill="#0000ff"/><rect x="240" y="360" width="1" height="64" fill="#ff0000"/><rect x="159" y="315" width="38" height="1" fill="#ff0000"/><rect x="196" y="315" width="18" height="1" fill="#0000ff"/><rect x="159" y="315" width="1" height="199" fill="#ff0000"/><rect x="159" y="513" width="631" height="1" fill="#ff0000"/><rect x="267" y="315" width="19" height="1" fill="#0000ff"/><rect x="285" y="315" width="128" height="1" fill="#ff0000"/><rect x="412" y="315" width="18" height="1" fill="#0000ff"/><rect x="321" y="225" width="1" height="91" fill="#ff0000"/><rect x="366" y="315" width="1" height="73" fill="#ff0000"/><rect x="366" y="387" width="1" height="20" fill="#000000"/><rect x="366" y="414" width="1" height="19" fill="#000000"/><rect x="366" y="432" width="1" height="82" fill="#ff0000"/><rect x="357" y="406" width="19" height="2" fill="#000"/><rect x="357" y="405" width="1" height="1" fill="#000"/><rect x="375" y="405" width="1" height="1" fill="#000"/><rect x="359" y="413" width="14" height="2" fill="#000"/><rect x="357" y="414" width="3" height="2" fill="#000"/><rect x="372" y="414" width="4" height="2" fill="#000"/><rect x="357" y="416" width="1" height="1" fill="#000"/><rect x="374" y="416" width="1" height="1" fill="#000"/><rect x="357" y="400" width="6" height="1" fill="#ff0000"/><rect x="359" y="397" width="1" height="6" fill="#ff0000"/><rect x="717" y="315" width="1" height="73" fill="#ff0000"/><rect x="717" y="387" width="1" height="20" fill="#000000"/><rect x="717" y="414" width="1" height="19" fill="#000000"/><rect x="717" y="432" width="1" height="82" fill="#ff0000"/><rect x="708" y="406" width="19" height="2" fill="#000"/><rect x="708" y="405" width="1" height="1" fill="#000"/><rect x="726" y="405" width="1" height="1" fill="#000"/><rect x="710" y="413" width="14" height="2" fill="#000"/><rect x="708" y="414" width="3" height="2" fill="#000"/><rect x="723" y="414" width="4" height="2" fill="#000"/><rect x="708" y="416" width="1" height="1" fill="#000"/><rect x="725" y="416" width="1" height="1" fill="#000"/><rect x="708" y="400" width="6" height="1" fill="#ff0000"/><rect x="710" y="397" width="1" height="6" fill="#ff0000"/><rect x="636" y="315" width="1" height="73" fill="#ff0000"/><rect x="636" y="387" width="1" height="19" fill="#000000"/><rect x="636" y="412" width="1" height="21" fill="#000000"/><rect x="636" y="432" width="1" height="100" fill="#ff0000"/><rect x="636" y="531" width="1" height="10" fill="#000000"/><rect x="627" y="540" width="19" height="1" fill="#000000"/><rect x="631" y="543" width="11" height="1" fill="#000000"/><rect x="634" y="546" width="5" height="1" fill="#000000"/><rect x="627" y="405" width="19" height="2" fill="#000"/><rect x="627" y="411" width="19" height="2" fill="#000"/><rect x="465" y="342" width="1" height="19" fill="#0000ff"/><rect x="465" y="360" width="1" height="154" fill="#ff0000"/><rect x="501" y="315" width="19" height="1" fill="#0000ff"/><rect x="519" y="315" width="271" height="1" fill="#ff0000"/><rect x="564" y="225" width="1" height="91" fill="#ff0000"/><rect x="582" y="225" width="1" height="10" fill="#ff0000"/><rect x="582" y="234" width="1" height="10" fill="#000000"/><rect x="573" y="243" width="19" height="1" fill="#000000"/><rect x="577" y="246" width="11" height="1" fill="#000000"/><rect x="580" y="249" width="5" height="1" fill="#000000"/><rect x="339" y="225" width="1" height="10" fill="#000000"/><rect x="330" y="234" width="19" height="1" fill="#000000"/><rect x="334" y="237" width="11" height="1" fill="#000000"/><rect x="337" y="240" width="5" height="1" fill="#000000"/><rect x="762" y="306" width="1" height="10" fill="#ff0000"/><rect x="762" y="306" width="73" height="1" fill="#ff0000"/><rect x="834" y="252" width="1" height="55" fill="#ff0000"/><rect x="834" y="238" width="1" height="15" fill="#000000"/><rect x="789" y="315" width="1" height="46" fill="#ff0000"/><rect x="789" y="360" width="1" height="10" fill="#000000"/><rect x="789" y="396" width="1" height="10" fill="#000000"/><rect x="789" y="405" width="1" height="28" fill="#ff0000"/><rect x="789" y="432" width="1" height="55" fill="#0000ff"/><rect x="789" y="486" width="1" height="28" fill="#ff0000"/><g shape-rendering="auto"><path d="M789.500,369.500L795.500,372.300L785,376.800L795.500,381.300L785,385.800L795.500,390.300L785,394.600L789.500,396.500" fill="none" stroke="#000" stroke-width="1"/></g><g shape-rendering="auto"><path d="M781,453.300H798L789.500,466.500Z" fill="#00f"/><path d="M802,451L806,455M799,463L803,467" stroke="#00f" stroke-width="1" fill="none"/><path d="M804.200,459.600L810.700,453L814,462.800Z" fill="#0f0"/><path d="M801.100,471.200L808,465.200L811,474.800Z" fill="#0f0"/></g><rect x="782" y="466" width="16" height="1" fill="#0000ff"/><rect x="798" y="238" width="1" height="15" fill="#000000"/><rect x="807" y="235" width="1" height="18" fill="#000000"/><rect x="807" y="252" width="1" height="28" fill="#ff0000"/><rect x="807" y="279" width="46" height="1" fill="#ff0000"/><rect x="843" y="235" width="1" height="18" fill="#000000"/><rect x="843" y="252" width="1" height="19" fill="#ff0000"/><rect x="843" y="270" width="10" height="1" fill="#ff0000"/><rect x="843" y="297" width="10" height="1" fill="#000000"/><rect x="846" y="300" width="7" height="1" fill="#000000"/><rect x="849" y="303" width="4" height="1" fill="#000000"/><rect x="158" y="250" width="2" height="4" fill="#ff0000"/><rect x="157" y="251" width="4" height="2" fill="#ff0000"/><rect x="239" y="250" width="2" height="4" fill="#ff0000"/><rect x="238" y="251" width="4" height="2" fill="#ff0000"/><rect x="86" y="421" width="2" height="4" fill="#ff0000"/><rect x="85" y="422" width="4" height="2" fill="#ff0000"/><rect x="176" y="421" width="2" height="4" fill="#ff0000"/><rect x="175" y="422" width="4" height="2" fill="#ff0000"/><rect x="320" y="313" width="2" height="4" fill="#ff0000"/><rect x="319" y="314" width="4" height="2" fill="#ff0000"/><rect x="365" y="313" width="2" height="4" fill="#ff0000"/><rect x="364" y="314" width="4" height="2" fill="#ff0000"/><rect x="563" y="313" width="2" height="4" fill="#ff0000"/><rect x="562" y="314" width="4" height="2" fill="#ff0000"/><rect x="635" y="313" width="2" height="4" fill="#ff0000"/><rect x="634" y="314" width="4" height="2" fill="#ff0000"/><rect x="716" y="313" width="2" height="4" fill="#ff0000"/><rect x="715" y="314" width="4" height="2" fill="#ff0000"/><rect x="761" y="313" width="2" height="4" fill="#ff0000"/><rect x="760" y="314" width="4" height="2" fill="#ff0000"/><rect x="365" y="511" width="2" height="4" fill="#ff0000"/><rect x="364" y="512" width="4" height="2" fill="#ff0000"/><rect x="464" y="511" width="2" height="4" fill="#ff0000"/><rect x="463" y="512" width="4" height="2" fill="#ff0000"/><rect x="635" y="511" width="2" height="4" fill="#ff0000"/><rect x="634" y="512" width="4" height="2" fill="#ff0000"/><rect x="716" y="511" width="2" height="4" fill="#ff0000"/><rect x="715" y="512" width="4" height="2" fill="#ff0000"/><rect x="851" y="277" width="2" height="4" fill="#ff0000"/><rect x="850" y="278" width="4" height="2" fill="#ff0000"/><g shape-rendering="auto"><path d="M240.500,288.500L267.500,315.500L240.500,342.500L213.500,315.500Z" fill="none" stroke="#00f" stroke-width="1"/><path d="M219,300.800L228.800,309.300L231,297.300Z" fill="#00f"/><path d="M225,291.200L237,302.700" stroke="#00f"/><path d="M255.700,294.200L246.200,303.400L258.800,306Z" fill="#00f"/><path d="M264.900,299.900L252.900,311.700" stroke="#00f"/><path d="M219,330.500L228.400,321.300L231,333.600Z" fill="#00f"/><path d="M225,339.700L237,328.400" stroke="#00f"/><path d="M246.200,327.300L258.800,324.200L255.700,336.200Z" fill="#00f"/><path d="M252.200,317.800L263.700,329.500" stroke="#00f"/></g><g shape-rendering="auto"><circle cx="87.500" cy="360" r="17.500" fill="none" stroke="#000"/><path d="M82,360.500Q84.500,355.500 87.500,360Q90.500,364.500 93,359.500" fill="none" stroke="#000"/></g><rect x="84" y="348" width="7" height="1" fill="#000000"/><rect x="87" y="345" width="1" height="7" fill="#000000"/><rect x="84" y="372" width="7" height="1" fill="#000000"/><rect x="429.500" y="306.500" width="72" height="36" fill="none" stroke="#00f"/><rect x="150.5" y="177.500" width="35" height="38" fill="#c0dcc0" stroke="#000"/><rect x="153.5" y="180.500" width="29" height="14" fill="#c0c0c0" stroke="#fff"/><g shape-rendering="auto"><path d="M157,194.5Q168,186 180,194.5" fill="none" stroke="#000" stroke-width="1"/><path d="M168.5,196L174,184" stroke="#000" stroke-width="1"/><circle cx="159.5" cy="210.500" r="2.400" fill="#808080" stroke="#000" stroke-width="0.800"/><circle cx="177.5" cy="210.500" r="2.400" fill="#808080" stroke="#000" stroke-width="0.800"/></g><rect x="156" y="201" width="7" height="1" fill="#000000"/><rect x="159" y="198" width="1" height="7" fill="#000000"/><rect x="174" y="201" width="7" height="1" fill="#000000"/><rect x="159" y="213" width="1" height="13" fill="#000000"/><rect x="177" y="213" width="1" height="13" fill="#000000"/><rect x="312.5" y="177.500" width="35" height="38" fill="#c0dcc0" stroke="#000"/><rect x="315.5" y="180.500" width="29" height="14" fill="#c0c0c0" stroke="#fff"/><g shape-rendering="auto"><path d="M319,194.5Q330,186 342,194.5" fill="none" stroke="#000" stroke-width="1"/><path d="M330.5,196L336,184" stroke="#000" stroke-width="1"/><circle cx="321.5" cy="210.500" r="2.400" fill="#808080" stroke="#000" stroke-width="0.800"/><circle cx="339.5" cy="210.500" r="2.400" fill="#808080" stroke="#000" stroke-width="0.800"/></g><rect x="318" y="201" width="7" height="1" fill="#000000"/><rect x="321" y="198" width="1" height="7" fill="#000000"/><rect x="336" y="201" width="7" height="1" fill="#000000"/><rect x="321" y="213" width="1" height="13" fill="#000000"/><rect x="339" y="213" width="1" height="13" fill="#000000"/><rect x="555.5" y="177.500" width="35" height="38" fill="#c0dcc0" stroke="#000"/><rect x="558.5" y="180.500" width="29" height="14" fill="#c0c0c0" stroke="#fff"/><g shape-rendering="auto"><path d="M562,194.5Q573,186 585,194.5" fill="none" stroke="#000" stroke-width="1"/><path d="M573.5,196L579,184" stroke="#000" stroke-width="1"/><circle cx="564.5" cy="210.500" r="2.400" fill="#808080" stroke="#000" stroke-width="0.800"/><circle cx="582.5" cy="210.500" r="2.400" fill="#808080" stroke="#000" stroke-width="0.800"/></g><rect x="561" y="201" width="7" height="1" fill="#000000"/><rect x="564" y="198" width="1" height="7" fill="#000000"/><rect x="579" y="201" width="7" height="1" fill="#000000"/><rect x="564" y="213" width="1" height="13" fill="#000000"/><rect x="582" y="213" width="1" height="13" fill="#000000"/><rect x="801" y="234" width="7" height="1" fill="#000000"/><rect x="837" y="234" width="7" height="1" fill="#000000"/><rect x="809" y="238" width="5" height="1" fill="#000000"/><rect x="845" y="238" width="5" height="1" fill="#000000"/><g fill="none" stroke="#00f" stroke-width="1"><path d="M780.500,153.500V261.500" stroke-dasharray="18 6"/><path d="M787,153.500H860" stroke-dasharray="18 6"/><path d="M780.500,261.500H852" stroke-dasharray="18 6"/></g></svg>
<span class="t" style="left:152px;top:161.50px;font:bold 11.5px/15px 'Liberation Serif',serif;color:#000;letter-spacing:-1.191px;">XMM1</span>
<span class="t" style="left:314px;top:161.50px;font:bold 11.5px/15px 'Liberation Serif',serif;color:#000;letter-spacing:-1.191px;">XMM2</span>
<span class="t" style="left:557px;top:161.50px;font:bold 11.5px/15px 'Liberation Serif',serif;color:#000;letter-spacing:-1.191px;">XMM3</span>
<span class="t" style="left:827px;top:155.00px;font:bold 12px/16px 'Liberation Serif',serif;color:#000;letter-spacing:0.998px;">XSC1</span>
<span class="t" style="left:107.2px;top:306.00px;font:normal 14px/18px 'Liberation Sans',sans-serif;color:#000;letter-spacing:-0.812px;-webkit-text-stroke:0.35px #000;">V1</span>
<span class="t" style="left:107.2px;top:336.00px;font:normal 14px/18px 'Liberation Sans',sans-serif;color:#000;letter-spacing:-0.229px;-webkit-text-stroke:0.35px #000;">12 Vrms</span>
<span class="t" style="left:107.2px;top:352.00px;font:normal 14px/18px 'Liberation Sans',sans-serif;color:#000;letter-spacing:-0.514px;-webkit-text-stroke:0.35px #000;">60 Hz</span>
<span class="t" style="left:107.2px;top:368.00px;font:normal 14px/18px 'Liberation Sans',sans-serif;color:#000;letter-spacing:-0.942px;-webkit-text-stroke:0.35px #000;">0°</span>
<span class="t" style="left:269.2px;top:271.00px;font:normal 14px/18px 'Liberation Sans',sans-serif;color:#0000ff;letter-spacing:-1.548px;-webkit-text-stroke:0.35px #0000ff;">D1</span>
<span class="t" style="left:269.2px;top:343.00px;font:normal 14px/18px 'Liberation Sans',sans-serif;color:#0000ff;letter-spacing:-0.720px;-webkit-text-stroke:0.35px #0000ff;">1B4B42</span>
<span class="t" style="left:456.7px;top:275.00px;font:normal 14px/18px 'Liberation Sans',sans-serif;color:#0000ff;letter-spacing:-0.948px;-webkit-text-stroke:0.35px #0000ff;">U1</span>
<span class="t" style="left:433.2px;top:289.00px;font:normal 14px/18px 'Liberation Sans',sans-serif;color:#0000ff;letter-spacing:-0.657px;-webkit-text-stroke:0.35px #0000ff;">LM7805CT</span>
<span class="t" style="left:377.7px;top:387.00px;font:normal 14px/18px 'Liberation Sans',sans-serif;color:#000;letter-spacing:-1.198px;-webkit-text-stroke:0.35px #000;">C1</span>
<span class="t" style="left:377.7px;top:401.00px;font:normal 14px/18px 'Liberation Sans',sans-serif;color:#000;letter-spacing:-0.794px;-webkit-text-stroke:0.35px #000;">2200µF</span>
<span class="t" style="left:646.7px;top:387.00px;font:normal 14px/18px 'Liberation Sans',sans-serif;color:#000;letter-spacing:-0.948px;-webkit-text-stroke:0.35px #000;">C3</span>
<span class="t" style="left:646.7px;top:410.00px;font:normal 14px/18px 'Liberation Sans',sans-serif;color:#000;letter-spacing:-0.795px;-webkit-text-stroke:0.35px #000;">220µF</span>
<span class="t" style="left:728.7px;top:387.00px;font:normal 14px/18px 'Liberation Sans',sans-serif;color:#000;letter-spacing:-0.948px;-webkit-text-stroke:0.35px #000;">C2</span>
<span class="t" style="left:728.7px;top:401.00px;font:normal 14px/18px 'Liberation Sans',sans-serif;color:#000;letter-spacing:-0.795px;-webkit-text-stroke:0.35px #000;">100µF</span>
<span class="t" style="left:796.2px;top:360.00px;font:normal 14px/18px 'Liberation Sans',sans-serif;color:#000;letter-spacing:-1.198px;-webkit-text-stroke:0.35px #000;">R1</span>
<span class="t" style="left:796.2px;top:374.00px;font:normal 14px/18px 'Liberation Sans',sans-serif;color:#000;letter-spacing:-0.706px;-webkit-text-stroke:0.35px #000;">330Ω</span>
<span class="t" style="left:815.2px;top:451.00px;font:normal 14px/18px 'Liberation Sans',sans-serif;color:#0000ff;letter-spacing:-1.005px;-webkit-text-stroke:0.35px #0000ff;">LED1</span>
<span class="t" style="left:432px;top:311.00px;font:normal 9px/12px 'Liberation Mono',monospace;color:#0000ff;letter-spacing:-0.401px;">LINE</span>
<span class="t" style="left:432px;top:319.00px;font:normal 9px/12px 'Liberation Mono',monospace;color:#0000ff;letter-spacing:-0.401px;">VOLTAGE</span>
<span class="t" style="left:477px;top:311.00px;font:normal 9px/12px 'Liberation Mono',monospace;color:#0000ff;letter-spacing:-0.401px;">VREG</span>
<span class="t" style="left:450px;top:334.00px;font:normal 9px/12px 'Liberation Mono',monospace;color:#0000ff;letter-spacing:-0.401px;">COMMON</span>
<span class="t" style="left:243px;top:276.70px;font:normal 7.3px/9px 'Liberation Sans',sans-serif;color:#0000ff;-webkit-text-stroke:0.200px #00f;">2</span>
<span class="t" style="left:199.5px;top:307.70px;font:normal 7.3px/9px 'Liberation Sans',sans-serif;color:#0000ff;-webkit-text-stroke:0.200px #00f;">4</span>
<span class="t" style="left:271.5px;top:307.70px;font:normal 7.3px/9px 'Liberation Sans',sans-serif;color:#0000ff;-webkit-text-stroke:0.200px #00f;">1</span>
<span class="t" style="left:243px;top:347.70px;font:normal 7.3px/9px 'Liberation Sans',sans-serif;color:#0000ff;-webkit-text-stroke:0.200px #00f;">3</span>
<span class="t" style="left:796px;top:222.00px;font:normal 8px/10px 'Liberation Sans',sans-serif;color:#000;">A</span>
<span class="t" style="left:832px;top:222.00px;font:normal 8px/10px 'Liberation Sans',sans-serif;color:#000;">B</span>
</main>
<footer class="sec" id="status-area" aria-label="Design tabs, status bar and taskbar">
<div style="left:0px;top:684px;width:1340px;height:1px;background:#696969;"></div>
<div style="left:4px;top:679px;width:60px;height:26px;background:#f0f0f0;"></div>
<div style="left:6px;top:705px;width:58px;height:2px;background:#000;"></div>
<div style="left:4px;top:703px;width:1px;height:1px;background:#000;"></div>
<div style="left:5px;top:704px;width:1px;height:1px;background:#000;"></div>
<svg class="a" style="left:6px;top:687px" width="19" height="20" viewBox="0 0 19 20" ><g transform="scale(1.080,0.940)"><path d="M1.500,1.500H10L14.500,6V16.500H1.500Z" fill="#fff" stroke="#000" stroke-width="1.500"/><path d="M10,1.500V6H14.500" fill="none" stroke="#000" stroke-width="1.200"/><path d="M2,5H5M9,6H10.500V13H7M3.500,5V13M2,13H4.500M3,16L4,14" stroke="#f00" stroke-width="1.200" fill="none"/><path d="M5,3.500V8L8,5.800ZM5,11.500L8,13M6.500,11V14" stroke="#000" stroke-width="1" fill="#fff"/></g></svg>
<span class="t" style="left:27.5px;top:688.00px;font:normal 12.5px/16px 'Liberation Sans',sans-serif;color:#000;letter-spacing:-0.266px;">Design1</span>
<div style="left:1307px;top:690px;width:15px;height:15px;background:#f0f0f0;border:1px solid;border-color:#fff #696969 #696969 #fff;"></div>
<div style="left:1322px;top:690px;width:15px;height:15px;background:#f0f0f0;border:1px solid;border-color:#fff #696969 #696969 #fff;"></div>
<svg class="a" style="left:1311px;top:693px" width="8" height="9" viewBox="0 0 8 9" ><path d="M6,0.500V8.500L1.500,4.500Z" fill="#00008b"/></svg>
<svg class="a" style="left:1326px;top:693px" width="8" height="9" viewBox="0 0 8 9" ><path d="M2,0.500V8.500L6.500,4.500Z" fill="#00008b"/></svg>
<div style="left:0px;top:709px;width:1366px;height:1px;background:#dcdcdc;"></div>
<div style="left:935px;top:711px;width:1px;height:16px;background:#d8d8d8;"></div>
<div style="left:1118px;top:711px;width:1px;height:16px;background:#d8d8d8;"></div>
<div style="left:1301px;top:711px;width:1px;height:16px;background:#d8d8d8;"></div>
<span class="t" style="left:940px;top:712.00px;font:normal 12px/16px 'Liberation Sans',sans-serif;color:#000;letter-spacing:-0.133px;">Alimentatore stabilizzato a 5 V: Sir</span>
<span class="t" style="left:1123.5px;top:712.00px;font:normal 12px/16px 'Liberation Sans',sans-serif;color:#000;letter-spacing:-0.405px;">Tran: 0.415 s</span>
<span class="t" style="left:787px;top:711.00px;font:normal 12px/16px 'Liberation Sans',sans-serif;color:#000;">-</span>
<div style="left:1306px;top:714px;width:6px;height:12px;background:#00ff00;border-left:1px solid #30b030;"></div>
<div style="left:1314px;top:714px;width:6px;height:12px;background:#00ff00;border-left:1px solid #30b030;"></div>
<div style="left:1322px;top:714px;width:6px;height:12px;background:#00ff00;border-left:1px solid #30b030;"></div>
<div style="left:1330px;top:714px;width:6px;height:12px;background:#00ff00;border-left:1px solid #30b030;"></div>
<div style="left:1338px;top:714px;width:6px;height:12px;background:#00ff00;border-left:1px solid #30b030;"></div>
<div style="left:1346px;top:714px;width:6px;height:12px;background:#00ff00;border-left:1px solid #30b030;"></div>
<div style="left:1354px;top:714px;width:6px;height:12px;background:#00ff00;border-left:1px solid #30b030;"></div>
<div style="left:1339px;top:560px;width:1px;height:125px;background:#696969;"></div>
<div style="left:1340px;top:658px;width:26px;height:1px;background:#a0a0a0;"></div>
<div style="left:1365px;top:560px;width:1px;height:99px;background:#a0a0a0;"></div>
<div style="left:1341px;top:597px;width:21px;height:1px;background:#a0a0a0;"></div>
<div style="left:1341px;top:630px;width:21px;height:1px;background:#a0a0a0;"></div>
<div style="left:1340px;top:707px;width:26px;height:1px;background:#a0a0a0;"></div>
<svg class="a" style="left:1344px;top:563px" width="16" height="28" viewBox="0 0 16 28" ><rect x="1.500" y="1.500" width="13" height="13" fill="#9d9d9d" stroke="#9d9d9d" stroke-dasharray="1 1"/><path d="M0,6.500H2M0,9.500H2M14,8H16" stroke="#9d9d9d"/><path d="M5.500,21V26L8.500,23.500Z" fill="#9d9d9d"/></svg>
<svg class="a" style="left:1344px;top:606px" width="17" height="17" viewBox="0 0 17 17" ><path d="M1,8L9,3.500L15.500,8L6,14Z" fill="none" stroke="#b0b0b0" stroke-width="1"/><path d="M3.500,7.500L6.500,11.500L11,10" fill="none" stroke="#9d9d9d" stroke-width="1.600"/></svg>
<svg class="a" style="left:1344px;top:637px" width="17" height="19" viewBox="0 0 17 19" ><circle cx="4.500" cy="14" r="3" fill="none" stroke="#9d9d9d" stroke-width="1.800"/><path d="M6.500,12L10,3L13,5M8,14.500H16" fill="none" stroke="#9d9d9d" stroke-width="1.300"/></svg>
<div style="left:0px;top:728px;width:1366px;height:8px;background:#64625c;"></div>
<div style="left:0px;top:728px;width:1366px;height:1px;background:#807f7a;"></div>
<div style="left:52px;top:729px;width:58px;height:7px;background:#8d8f8b;border:1px solid #a8aaa6;border-bottom:none;"></div>
<div style="left:176px;top:729px;width:58px;height:7px;background:#8d8f8b;border:1px solid #a8aaa6;border-bottom:none;"></div>
<svg class="a" style="left:70px;top:733px" width="24" height="3" viewBox="0 0 24 3" ><ellipse cx="11" cy="7" rx="9" ry="6" fill="#e0483a"/></svg>
<svg class="a" style="left:130px;top:733px" width="24" height="3" viewBox="0 0 24 3" ><ellipse cx="11" cy="7" rx="9" ry="6" fill="#e8eef8" stroke="#3a6ab0" stroke-width="1.200"/></svg>
<svg class="a" style="left:190px;top:733px" width="30" height="3" viewBox="0 0 30 3" ><ellipse cx="14" cy="7" rx="13" ry="6" fill="#7a74b8"/></svg>
<svg class="a" style="left:26px;top:733px" width="14" height="3" viewBox="0 0 14 3" ><path d="M6,3L12,0.500V3Z" fill="#fff"/></svg>
</footer>
<section class="sec" id="multimeters" aria-label="Multimeter instrument windows">
<div style="left:56px;top:539px;width:197px;height:178px;background:#ebebeb;border:1px solid #d0d0d0;"></div>
<span class="t" style="left:78.4px;top:544.50px;font:normal 15.5px/20px 'Liberation Sans',sans-serif;color:#1a1a1a;letter-spacing:-0.119px;">Multimeter-XMM1</span>
<div style="left:215px;top:540px;width:31px;height:20px;background:#bcbcbc;"></div>
<svg class="a" style="left:225px;top:544px" width="11" height="11" viewBox="0 0 11 11" ><path d="M1.500,1.500L9.500,9.500M9.500,1.500L1.500,9.500" stroke="#fff" stroke-width="1.500"/></svg>
<div style="left:63px;top:569px;width:183px;height:141px;background:#f0f0f0;border:1px solid #dadada;"></div>
<div style="left:64px;top:570px;width:182px;height:32px;background:#fff;border:2px solid;border-color:#a0a0a0 #696969 #696969 #a0a0a0;"></div>
<div style="left:68px;top:575px;width:172px;height:22px;background:#000;"></div>
<span class="t" style="left:154.7px;top:575.20px;font:normal 15.5px/20px 'Liberation Sans',sans-serif;color:#fff;transform:translateX(-50%);">11.997 V</span>
<div style="left:70px;top:610px;width:169px;height:29px;border:1px solid #dcdcdc;"></div>
<div class="btn" style="left:83px;top:614px;width:28px;height:20px;"></div>
<span class="t" style="left:92.5px;top:616.60px;font:normal 11px/14px 'Liberation Sans',sans-serif;color:#000;">A</span>
<div class="btn sel" style="left:120px;top:614px;width:28px;height:20px;"></div>
<span class="t" style="left:130.5px;top:616.60px;font:normal 11px/14px 'Liberation Sans',sans-serif;color:#000;">V</span>
<div class="btn" style="left:158px;top:614px;width:29px;height:20px;"></div>
<span class="t" style="left:167.5px;top:616.60px;font:normal 11px/14px 'Liberation Sans',sans-serif;color:#000;">Ω</span>
<div class="btn" style="left:197px;top:614px;width:29px;height:20px;"></div>
<span class="t" style="left:204px;top:616.60px;font:normal 11px/14px 'Liberation Sans',sans-serif;color:#000;letter-spacing:-0.477px;">dB</span>
<div style="left:97px;top:637px;width:115px;height:27px;background:#f0f0f0;border:1px solid #dcdcdc;"></div>
<div class="btn sel" style="left:107px;top:644px;width:43px;height:14px;"></div>
<div class="btn" style="left:162px;top:644px;width:40px;height:14px;"></div>
<svg class="a" style="left:115px;top:645px" width="26" height="12" viewBox="0 0 26 12" ><path d="M2,6.500C4,3.500 6,1.500 9.500,1.500C13,1.500 14,7.500 17,7.500H20L24,3.500" fill="none" stroke="#000" stroke-width="1.300"/></svg>
<div style="left:171px;top:648px;width:22px;height:2px;background:#000;"></div>
<svg class="a" style="left:70px;top:687px" width="15" height="15" viewBox="0 0 15 15" ><circle cx="7.500" cy="7.500" r="6.200" fill="#f1f1f1" stroke="#c2c2c2" stroke-width="1"/><circle cx="7.500" cy="7.500" r="3.600" fill="#6e6e6e"/></svg>
<svg class="a" style="left:227px;top:688px" width="15" height="15" viewBox="0 0 15 15" ><circle cx="7.500" cy="7.500" r="6.200" fill="#f1f1f1" stroke="#c2c2c2" stroke-width="1"/><circle cx="7.500" cy="7.500" r="3.600" fill="#6e6e6e"/></svg>
<div style="left:75px;top:681px;width:7px;height:1px;background:#000;"></div>
<div style="left:78px;top:678px;width:1px;height:7px;background:#000;"></div>
<div style="left:229px;top:684px;width:6px;height:1px;background:#000;"></div>
<div class="btn" style="left:119px;top:675px;width:70px;height:17px;"></div>
<span class="t" style="left:139.5px;top:676.60px;font:normal 11px/14px 'Liberation Sans',sans-serif;color:#000;letter-spacing:0.220px;">Set...</span>
<div style="left:235px;top:707px;width:2px;height:2px;background:#fff;"></div>
<div style="left:234px;top:706px;width:2px;height:2px;background:#a0a0a0;"></div>
<div style="left:239px;top:707px;width:2px;height:2px;background:#fff;"></div>
<div style="left:238px;top:706px;width:2px;height:2px;background:#a0a0a0;"></div>
<div style="left:243px;top:707px;width:2px;height:2px;background:#fff;"></div>
<div style="left:242px;top:706px;width:2px;height:2px;background:#a0a0a0;"></div>
<div style="left:243px;top:703px;width:2px;height:2px;background:#fff;"></div>
<div style="left:242px;top:702px;width:2px;height:2px;background:#a0a0a0;"></div>
<div style="left:243px;top:699px;width:2px;height:2px;background:#fff;"></div>
<div style="left:242px;top:698px;width:2px;height:2px;background:#a0a0a0;"></div>
<div style="left:296px;top:538px;width:197px;height:175px;background:#ebebeb;border:1px solid #d0d0d0;"></div>
<span class="t" style="left:318.4px;top:543.50px;font:normal 15.5px/20px 'Liberation Sans',sans-serif;color:#1a1a1a;letter-spacing:-0.119px;">Multimeter-XMM2</span>
<div style="left:455px;top:539px;width:31px;height:20px;background:#bcbcbc;"></div>
<svg class="a" style="left:465px;top:543px" width="11" height="11" viewBox="0 0 11 11" ><path d="M1.500,1.500L9.500,9.500M9.500,1.500L1.500,9.500" stroke="#fff" stroke-width="1.500"/></svg>
<div style="left:303px;top:568px;width:183px;height:138px;background:#f0f0f0;border:1px solid #dadada;"></div>
<div style="left:304px;top:569px;width:182px;height:32px;background:#fff;border:2px solid;border-color:#a0a0a0 #696969 #696969 #a0a0a0;"></div>
<div style="left:308px;top:574px;width:172px;height:22px;background:#000;"></div>
<span class="t" style="left:394.7px;top:574.20px;font:normal 15.5px/20px 'Liberation Sans',sans-serif;color:#fff;transform:translateX(-50%);">15.961 V</span>
<div style="left:310px;top:609px;width:169px;height:29px;border:1px solid #dcdcdc;"></div>
<div class="btn" style="left:323px;top:613px;width:28px;height:20px;"></div>
<span class="t" style="left:332.5px;top:615.60px;font:normal 11px/14px 'Liberation Sans',sans-serif;color:#000;">A</span>
<div class="btn sel" style="left:360px;top:613px;width:28px;height:20px;"></div>
<span class="t" style="left:370.5px;top:615.60px;font:normal 11px/14px 'Liberation Sans',sans-serif;color:#000;">V</span>
<div class="btn" style="left:398px;top:613px;width:29px;height:20px;"></div>
<span class="t" style="left:407.5px;top:615.60px;font:normal 11px/14px 'Liberation Sans',sans-serif;color:#000;">Ω</span>
<div class="btn" style="left:437px;top:613px;width:29px;height:20px;"></div>
<span class="t" style="left:444px;top:615.60px;font:normal 11px/14px 'Liberation Sans',sans-serif;color:#000;letter-spacing:-0.477px;">dB</span>
<div style="left:337px;top:636px;width:115px;height:27px;background:#f0f0f0;border:1px solid #dcdcdc;"></div>
<div class="btn" style="left:347px;top:643px;width:43px;height:14px;"></div>
<div class="btn sel" style="left:402px;top:643px;width:40px;height:14px;"></div>
<svg class="a" style="left:355px;top:644px" width="26" height="12" viewBox="0 0 26 12" ><path d="M2,6.500C4,3.500 6,1.500 9.500,1.500C13,1.500 14,7.500 17,7.500H20L24,3.500" fill="none" stroke="#000" stroke-width="1.300"/></svg>
<div style="left:411px;top:647px;width:22px;height:2px;background:#000;"></div>
<svg class="a" style="left:310px;top:682px" width="15" height="15" viewBox="0 0 15 15" ><circle cx="7.500" cy="7.500" r="6.200" fill="#f1f1f1" stroke="#c2c2c2" stroke-width="1"/><circle cx="7.500" cy="7.500" r="3.600" fill="#6e6e6e"/></svg>
<svg class="a" style="left:467px;top:684px" width="15" height="15" viewBox="0 0 15 15" ><circle cx="7.500" cy="7.500" r="6.200" fill="#f1f1f1" stroke="#c2c2c2" stroke-width="1"/><circle cx="7.500" cy="7.500" r="3.600" fill="#6e6e6e"/></svg>
<div style="left:315px;top:676px;width:7px;height:1px;background:#000;"></div>
<div style="left:318px;top:673px;width:1px;height:7px;background:#000;"></div>
<div style="left:469px;top:680px;width:6px;height:1px;background:#000;"></div>
<div class="btn" style="left:359px;top:674px;width:70px;height:17px;"></div>
<span class="t" style="left:379.5px;top:675.60px;font:normal 11px/14px 'Liberation Sans',sans-serif;color:#000;letter-spacing:0.220px;">Set...</span>
<div style="left:475px;top:703px;width:2px;height:2px;background:#fff;"></div>
<div style="left:474px;top:702px;width:2px;height:2px;background:#a0a0a0;"></div>
<div style="left:479px;top:703px;width:2px;height:2px;background:#fff;"></div>
<div style="left:478px;top:702px;width:2px;height:2px;background:#a0a0a0;"></div>
<div style="left:483px;top:703px;width:2px;height:2px;background:#fff;"></div>
<div style="left:482px;top:702px;width:2px;height:2px;background:#a0a0a0;"></div>
<div style="left:483px;top:699px;width:2px;height:2px;background:#fff;"></div>
<div style="left:482px;top:698px;width:2px;height:2px;background:#a0a0a0;"></div>
<div style="left:483px;top:695px;width:2px;height:2px;background:#fff;"></div>
<div style="left:482px;top:694px;width:2px;height:2px;background:#a0a0a0;"></div>
<div style="left:653px;top:545px;width:197px;height:175px;background:#ebebeb;border:1px solid #d0d0d0;"></div>
<span class="t" style="left:675.4px;top:550.50px;font:normal 15.5px/20px 'Liberation Sans',sans-serif;color:#1a1a1a;letter-spacing:-0.119px;">Multimeter-XMM3</span>
<div style="left:812px;top:546px;width:31px;height:20px;background:#bcbcbc;"></div>
<svg class="a" style="left:822px;top:550px" width="11" height="11" viewBox="0 0 11 11" ><path d="M1.500,1.500L9.500,9.500M9.500,1.500L1.500,9.500" stroke="#fff" stroke-width="1.500"/></svg>
<div style="left:660px;top:575px;width:183px;height:138px;background:#f0f0f0;border:1px solid #dadada;"></div>
<div style="left:661px;top:576px;width:182px;height:32px;background:#fff;border:2px solid;border-color:#a0a0a0 #696969 #696969 #a0a0a0;"></div>
<div style="left:665px;top:581px;width:172px;height:22px;background:#000;"></div>
<span class="t" style="left:751.7px;top:581.20px;font:normal 15.5px/20px 'Liberation Sans',sans-serif;color:#fff;transform:translateX(-50%);">5.002 V</span>
<div style="left:667px;top:616px;width:169px;height:29px;border:1px solid #dcdcdc;"></div>
<div class="btn" style="left:680px;top:620px;width:28px;height:20px;"></div>
<span class="t" style="left:689.5px;top:622.60px;font:normal 11px/14px 'Liberation Sans',sans-serif;color:#000;">A</span>
<div class="btn sel" style="left:717px;top:620px;width:28px;height:20px;"></div>
<span class="t" style="left:727.5px;top:622.60px;font:normal 11px/14px 'Liberation Sans',sans-serif;color:#000;">V</span>
<div class="btn" style="left:755px;top:620px;width:29px;height:20px;"></div>
<span class="t" style="left:764.5px;top:622.60px;font:normal 11px/14px 'Liberation Sans',sans-serif;color:#000;">Ω</span>
<div class="btn" style="left:794px;top:620px;width:29px;height:20px;"></div>
<span class="t" style="left:801px;top:622.60px;font:normal 11px/14px 'Liberation Sans',sans-serif;color:#000;letter-spacing:-0.477px;">dB</span>
<div style="left:694px;top:643px;width:115px;height:27px;background:#f0f0f0;border:1px solid #dcdcdc;"></div>
<div class="btn" style="left:704px;top:650px;width:43px;height:14px;"></div>
<div class="btn sel" style="left:759px;top:650px;width:40px;height:14px;"></div>
<svg class="a" style="left:712px;top:651px" width="26" height="12" viewBox="0 0 26 12" ><path d="M2,6.500C4,3.500 6,1.500 9.500,1.500C13,1.500 14,7.500 17,7.500H20L24,3.500" fill="none" stroke="#000" stroke-width="1.300"/></svg>
<div style="left:768px;top:654px;width:22px;height:2px;background:#000;"></div>
<svg class="a" style="left:667px;top:689px" width="15" height="15" viewBox="0 0 15 15" ><circle cx="7.500" cy="7.500" r="6.200" fill="#f1f1f1" stroke="#c2c2c2" stroke-width="1"/><circle cx="7.500" cy="7.500" r="3.600" fill="#6e6e6e"/></svg>
<svg class="a" style="left:824px;top:691px" width="15" height="15" viewBox="0 0 15 15" ><circle cx="7.500" cy="7.500" r="6.200" fill="#f1f1f1" stroke="#c2c2c2" stroke-width="1"/><circle cx="7.500" cy="7.500" r="3.600" fill="#6e6e6e"/></svg>
<div style="left:672px;top:683px;width:7px;height:1px;background:#000;"></div>
<div style="left:675px;top:680px;width:1px;height:7px;background:#000;"></div>
<div style="left:826px;top:687px;width:6px;height:1px;background:#000;"></div>
<div class="btn" style="left:716px;top:681px;width:70px;height:17px;"></div>
<span class="t" style="left:736.5px;top:682.60px;font:normal 11px/14px 'Liberation Sans',sans-serif;color:#000;letter-spacing:0.220px;">Set...</span>
<div style="left:832px;top:710px;width:2px;height:2px;background:#fff;"></div>
<div style="left:831px;top:709px;width:2px;height:2px;background:#a0a0a0;"></div>
<div style="left:836px;top:710px;width:2px;height:2px;background:#fff;"></div>
<div style="left:835px;top:709px;width:2px;height:2px;background:#a0a0a0;"></div>
<div style="left:840px;top:710px;width:2px;height:2px;background:#fff;"></div>
<div style="left:839px;top:709px;width:2px;height:2px;background:#a0a0a0;"></div>
<div style="left:840px;top:706px;width:2px;height:2px;background:#fff;"></div>
<div style="left:839px;top:705px;width:2px;height:2px;background:#a0a0a0;"></div>
<div style="left:840px;top:702px;width:2px;height:2px;background:#fff;"></div>
<div style="left:839px;top:701px;width:2px;height:2px;background:#a0a0a0;"></div>
</section>
<section class="sec" id="oscilloscope" aria-label="Oscilloscope-XSC1 instrument window">
<div style="left:852px;top:107px;width:520px;height:453px;background:#ebebeb;border:1px solid #d4d4d4;"></div>
<span class="t" style="left:1073px;top:112.80px;font:normal 15.5px/20px 'Liberation Sans',sans-serif;color:#1a1a1a;letter-spacing:-0.619px;">Oscilloscope-XSC1</span>
<div style="left:859px;top:137px;width:512px;height:416px;background:#f0f0f0;border:1px solid #dadada;"></div>
<div style="left:860px;top:138px;width:510px;height:250px;background:#000;border:2px solid;border-color:#808080 #fff #fff #808080;"></div>
<svg class="a" style="left:0;top:0" width="1366" height="736" viewBox="0 0 1366 736" shape-rendering="crispEdges"><path d="M924.5,154V378" stroke="#d8d8d8" stroke-width="1" stroke-dasharray="3 3"/><rect x="924" y="150" width="1" height="1" fill="#d8d8d8"/><path d="M977.5,154V378" stroke="#d8d8d8" stroke-width="1" stroke-dasharray="3 3"/><rect x="977" y="150" width="1" height="1" fill="#d8d8d8"/><path d="M1029.5,154V378" stroke="#d8d8d8" stroke-width="1" stroke-dasharray="3 3"/><rect x="1029" y="150" width="1" height="1" fill="#d8d8d8"/><path d="M1082.5,154V378" stroke="#d8d8d8" stroke-width="1" stroke-dasharray="3 3"/><rect x="1082" y="150" width="1" height="1" fill="#d8d8d8"/><path d="M1135.5,154V378" stroke="#d8d8d8" stroke-width="1" stroke-dasharray="3 3"/><rect x="1135" y="150" width="1" height="1" fill="#d8d8d8"/><path d="M1188.5,154V378" stroke="#d8d8d8" stroke-width="1" stroke-dasharray="3 3"/><rect x="1188" y="150" width="1" height="1" fill="#d8d8d8"/><path d="M1241.5,154V378" stroke="#d8d8d8" stroke-width="1" stroke-dasharray="3 3"/><rect x="1241" y="150" width="1" height="1" fill="#d8d8d8"/><path d="M1293.5,154V378" stroke="#d8d8d8" stroke-width="1" stroke-dasharray="3 3"/><rect x="1293" y="150" width="1" height="1" fill="#d8d8d8"/><path d="M1346.5,154V378" stroke="#d8d8d8" stroke-width="1" stroke-dasharray="3 3"/><rect x="1346" y="150" width="1" height="1" fill="#d8d8d8"/><path d="M871,187.5H1366" stroke="#d8d8d8" stroke-width="1" stroke-dasharray="3 3"/><path d="M871,225.5H1366" stroke="#d8d8d8" stroke-width="1" stroke-dasharray="3 3"/><path d="M871,302.5H1366" stroke="#d8d8d8" stroke-width="1" stroke-dasharray="3 3"/><path d="M871,340.5H1366" stroke="#d8d8d8" stroke-width="1" stroke-dasharray="3 3"/><rect x="872" y="263" width="494" height="1" fill="#fff"/><path d="M872.5,264v1.500M882.5,264v1.500M893.5,264v1.500M903.5,264v1.500M914.5,264v1.500M924.5,264v1.500M935.5,264v1.500M945.5,264v1.500M956.5,264v1.500M967.5,264v1.500M977.5,264v1.500M988.5,264v1.500M998.5,264v1.500M1009.5,264v1.500M1019.5,264v1.500M1030.5,264v1.500M1040.5,264v1.500M1051.5,264v1.500M1062.5,264v1.500M1072.5,264v1.500M1083.5,264v1.500M1093.5,264v1.500M1104.5,264v1.500M1114.5,264v1.500M1125.5,264v1.500M1136.5,264v1.500M1146.5,264v1.500M1157.5,264v1.500M1167.5,264v1.500M1178.5,264v1.500M1188.5,264v1.500M1199.5,264v1.500M1209.5,264v1.500M1220.5,264v1.500M1231.5,264v1.500M1241.5,264v1.500M1252.5,264v1.500M1262.5,264v1.500M1273.5,264v1.500M1283.5,264v1.500M1294.5,264v1.500M1304.5,264v1.500M1315.5,264v1.500M1326.5,264v1.500M1336.5,264v1.500M1347.5,264v1.500M1357.5,264v1.500M1368.5,264v1.500M1378.5,264v1.500M1389.5,264v1.500M1400.5,264v1.500M1410.5,264v1.500M1421.5,264v1.500M1431.5,264v1.500M1442.5,264v1.500M1452.5,264v1.500M1463.5,264v1.500M1473.5,264v1.500M1484.5,264v1.500M1495.5,264v1.500M1505.5,264v1.500M1516.5,264v1.500M1526.5,264v1.500M1537.5,264v1.500M1547.5,264v1.500M1558.5,264v1.500M1568.5,264v1.500M1579.5,264v1.500M1590.5,264v1.500M1600.5,264v1.500M1611.5,264v1.500M1621.5,264v1.500M1632.5,264v1.500M1642.5,264v1.500M1653.5,264v1.500M1664.5,264v1.500M1674.5,264v1.500M1685.5,264v1.500M1695.5,264v1.500M1706.5,264v1.500M1716.5,264v1.500M1727.5,264v1.500M1737.5,264v1.500M1748.5,264v1.500M1759.5,264v1.500M1769.5,264v1.500M1780.5,264v1.500M1790.5,264v1.500M1801.5,264v1.500M1811.5,264v1.500M1822.5,264v1.500M1832.5,264v1.500M1843.5,264v1.500M1854.5,264v1.500M1864.5,264v1.500" stroke="#e8e8e8" stroke-width="1"/><rect x="871" y="149" width="495" height="1" fill="#fff"/><rect x="871" y="378" width="495" height="1" fill="#fff"/><polyline points="871.5,302.4 872.5,306.0 873.5,309.4 874.5,312.6 875.5,315.5 876.5,318.2 877.5,320.6 878.5,322.7 879.5,324.5 880.5,326.0 881.5,327.1 882.5,328.0 883.5,328.5 884.5,328.7 885.5,328.6 886.5,328.1 887.5,327.3 888.5,326.2 889.5,324.7 890.5,323.0 891.5,320.9 892.5,318.6 893.5,315.9 894.5,313.0 895.5,309.9 896.5,306.5 897.5,302.9 898.5,299.1 899.5,295.2 900.5,291.0 901.5,286.7 902.5,282.4 903.5,277.9 904.5,273.3 905.5,268.7 906.5,264.1 907.5,259.5 908.5,254.9 909.5,250.3 910.5,245.8 911.5,241.5 912.5,237.2 913.5,233.0 914.5,229.1 915.5,225.3 916.5,221.7 917.5,218.3 918.5,215.2 919.5,212.3 920.5,209.6 921.5,207.3 922.5,205.2 923.5,203.5 924.5,202.0 925.5,200.9 926.5,200.1 927.5,199.6 928.5,199.5 929.5,199.7 930.5,200.2 931.5,201.1 932.5,202.2 933.5,203.7 934.5,205.5 935.5,207.6 936.5,210.0 937.5,212.7 938.5,215.6 939.5,218.8 940.5,222.2 941.5,225.8 942.5,229.7 943.5,233.7 944.5,237.8 945.5,242.1 946.5,246.5 947.5,251.0 948.5,255.6 949.5,260.2 950.5,264.8 951.5,269.4 952.5,274.0 953.5,278.6 954.5,283.0 955.5,287.4 956.5,291.7 957.5,295.8 958.5,299.7 959.5,303.5 960.5,307.0 961.5,310.4 962.5,313.5 963.5,316.3 964.5,318.9 965.5,321.2 966.5,323.2 967.5,325.0 968.5,326.4 969.5,327.4 970.5,328.2 971.5,328.6 972.5,328.7 973.5,328.5 974.5,327.9 975.5,327.0 976.5,325.8 977.5,324.2 978.5,322.4 979.5,320.2 980.5,317.8 981.5,315.1 982.5,312.1 983.5,308.9 984.5,305.5 985.5,301.8 986.5,298.0 987.5,293.9 988.5,289.8 989.5,285.4 990.5,281.0 991.5,276.5 992.5,271.9 993.5,267.3 994.5,262.7 995.5,258.1 996.5,253.5 997.5,249.0 998.5,244.5 999.5,240.2 1000.5,235.9 1001.5,231.8 1002.5,227.9 1003.5,224.2 1004.5,220.6 1005.5,217.3 1006.5,214.3 1007.5,211.4 1008.5,208.9 1009.5,206.6 1010.5,204.7 1011.5,203.0 1012.5,201.7 1013.5,200.6 1014.5,199.9 1015.5,199.6 1016.5,199.5 1017.5,199.8 1018.5,200.4 1019.5,201.4 1020.5,202.6 1021.5,204.2 1022.5,206.1 1023.5,208.3 1024.5,210.8 1025.5,213.5 1026.5,216.5 1027.5,219.8 1028.5,223.3 1029.5,227.0 1030.5,230.8 1031.5,234.9 1032.5,239.1 1033.5,243.4 1034.5,247.8 1035.5,252.4 1036.5,256.9 1037.5,261.6 1038.5,266.2 1039.5,270.8 1040.5,275.4 1041.5,279.9 1042.5,284.3 1043.5,288.7 1044.5,292.9 1045.5,297.0 1046.5,300.9 1047.5,304.6 1048.5,308.1 1049.5,311.3 1050.5,314.4 1051.5,317.2 1052.5,319.7 1053.5,321.9 1054.5,323.8 1055.5,325.4 1056.5,326.7 1057.5,327.7 1058.5,328.3 1059.5,328.7 1060.5,328.7 1061.5,328.3 1062.5,327.6 1063.5,326.7 1064.5,325.3 1065.5,323.7 1066.5,321.8 1067.5,319.5 1068.5,317.0 1069.5,314.2 1070.5,311.2 1071.5,307.9 1072.5,304.4 1073.5,300.7 1074.5,296.8 1075.5,292.7 1076.5,288.5 1077.5,284.1 1078.5,279.7 1079.5,275.2 1080.5,270.6 1081.5,266.0 1082.5,261.3 1083.5,256.7 1084.5,252.1 1085.5,247.6 1086.5,243.2 1087.5,238.9 1088.5,234.7 1089.5,230.6 1090.5,226.8 1091.5,223.1 1092.5,219.6 1093.5,216.4 1094.5,213.4 1095.5,210.7 1096.5,208.2 1097.5,206.0 1098.5,204.1 1099.5,202.6 1100.5,201.3 1101.5,200.4 1102.5,199.8 1103.5,199.5 1104.5,199.6 1105.5,200.0 1106.5,200.7 1107.5,201.7 1108.5,203.1 1109.5,204.8 1110.5,206.7 1111.5,209.0 1112.5,211.6 1113.5,214.4 1114.5,217.5 1115.5,220.8 1116.5,224.4 1117.5,228.1 1118.5,232.0 1119.5,236.1 1120.5,240.4 1121.5,244.7 1122.5,249.2 1123.5,253.7 1124.5,258.3 1125.5,262.9 1126.5,267.6 1127.5,272.2 1128.5,276.7 1129.5,281.2 1130.5,285.7 1131.5,290.0 1132.5,294.1 1133.5,298.2 1134.5,302.0 1135.5,305.6 1136.5,309.1 1137.5,312.3 1138.5,315.2 1139.5,317.9 1140.5,320.4 1141.5,322.5 1142.5,324.3 1143.5,325.8 1144.5,327.0 1145.5,327.9 1146.5,328.5 1147.5,328.7 1148.5,328.6 1149.5,328.1 1150.5,327.4 1151.5,326.3 1152.5,324.9 1153.5,323.2 1154.5,321.1 1155.5,318.8 1156.5,316.2 1157.5,313.3 1158.5,310.2 1159.5,306.9 1160.5,303.3 1161.5,299.5" fill="none" stroke="#f00" stroke-width="1.100" shape-rendering="auto"/><rect x="872" y="244" width="290" height="1" fill="#f00"/><rect x="871" y="149" width="1" height="230" fill="#0f0"/><g shape-rendering="auto"><path d="M862.500,141H880.500L871.500,149.500Z" fill="#f0f"/><path d="M862.500,141H880.500L879,142.500H864Z" fill="#0ff"/><rect x="870" y="142" width="3" height="5" fill="#000"/><rect x="870" y="143" width="2" height="1" fill="#ff0"/><rect x="870" y="145" width="2" height="1" fill="#ff0"/><rect x="871" y="147" width="2" height="1" fill="#0ff"/><circle cx="871.500" cy="302.500" r="2.500" fill="none" stroke="#f0f" stroke-width="1"/></g></svg>
<div style="left:860px;top:388px;width:510px;height:1px;background:#696969;"></div>
<div style="left:860px;top:389px;width:510px;height:1px;background:#fafafa;"></div>
<svg class="a" style="left:864px;top:391px" width="9" height="10" viewBox="0 0 9 10" ><path d="M6.500,1.500L2.500,5L6.500,8.500" fill="none" stroke="#606060" stroke-width="1.800"/></svg>
<div style="left:1227px;top:390px;width:140px;height:11px;background:#cdcdcd;"></div>
<div style="left:860px;top:406px;width:59px;height:59px;border:1px solid #a0a0a0;box-shadow:inset 1px 1px 0 #fff;"></div>
<span class="t" style="left:866px;top:413.70px;font:normal 11px/14px 'Liberation Sans',sans-serif;color:#000;letter-spacing:-0.418px;">T1</span>
<span class="t" style="left:866px;top:427.70px;font:normal 11px/14px 'Liberation Sans',sans-serif;color:#000;letter-spacing:-0.418px;">T2</span>
<span class="t" style="left:866px;top:447.60px;font:normal 11px/14px 'Liberation Sans',sans-serif;color:#000;letter-spacing:-0.367px;">T2-T1</span>
<div style="left:886px;top:413px;width:13px;height:16px;background:#e6e6e6;border:1px solid #d0d0d0;"></div>
<div style="left:903px;top:413px;width:13px;height:16px;background:#e6e6e6;border:1px solid #d0d0d0;"></div>
<div style="left:886px;top:431px;width:13px;height:14px;background:#e6e6e6;border:1px solid #d0d0d0;"></div>
<div style="left:903px;top:431px;width:13px;height:14px;background:#e6e6e6;border:1px solid #d0d0d0;"></div>
<svg class="a" style="left:887.5px;top:416px" width="11" height="9" viewBox="0 0 11 9" ><path d="M0.500,4.500L5,0V3H10V6H5V9Z" fill="#000"/></svg>
<svg class="a" style="left:904px;top:416px" width="11" height="9" viewBox="0 0 11 9" ><path d="M10.500,4.500L6,0V3H1V6H6V9Z" fill="#000"/></svg>
<svg class="a" style="left:887.5px;top:433.5px" width="11" height="9" viewBox="0 0 11 9" ><path d="M0.500,4.500L5,0V3H10V6H5V9Z" fill="#000"/></svg>
<svg class="a" style="left:904px;top:433.5px" width="11" height="9" viewBox="0 0 11 9" ><path d="M10.500,4.500L6,0V3H1V6H6V9Z" fill="#000"/></svg>
<div style="left:920px;top:406px;width:323px;height:59px;background:#fff;border:2px solid;border-color:#7c7c7c #fff #fff #7c7c7c;"></div>
<span class="t" style="left:945.3px;top:408.00px;font:normal 11px/14px 'Liberation Sans',sans-serif;color:#000;letter-spacing:-0.634px;">Time</span>
<span class="t" style="left:1010.5px;top:408.00px;font:normal 11px/14px 'Liberation Sans',sans-serif;color:#000;letter-spacing:-0.270px;">Channel_A</span>
<span class="t" style="left:1090.5px;top:408.00px;font:normal 11px/14px 'Liberation Sans',sans-serif;color:#000;letter-spacing:-0.381px;">Channel_B</span>
<span class="t" style="left:928px;top:421.00px;font:normal 11px/14px 'Liberation Sans',sans-serif;color:#000;letter-spacing:-0.198px;">360.003 ms</span>
<span class="t" style="left:1014px;top:421.00px;font:normal 11px/14px 'Liberation Sans',sans-serif;color:#000;letter-spacing:-0.198px;">-9.990 V</span>
<span class="t" style="left:1097px;top:421.00px;font:normal 11px/14px 'Liberation Sans',sans-serif;color:#000;letter-spacing:-0.203px;">5.002 V</span>
<span class="t" style="left:928px;top:434.00px;font:normal 11px/14px 'Liberation Sans',sans-serif;color:#000;letter-spacing:-0.198px;">360.003 ms</span>
<span class="t" style="left:1014px;top:434.00px;font:normal 11px/14px 'Liberation Sans',sans-serif;color:#000;letter-spacing:-0.198px;">-9.990 V</span>
<span class="t" style="left:1097px;top:434.00px;font:normal 11px/14px 'Liberation Sans',sans-serif;color:#000;letter-spacing:-0.203px;">5.002 V</span>
<span class="t" style="left:937px;top:447.00px;font:normal 11px/14px 'Liberation Sans',sans-serif;color:#000;letter-spacing:-0.083px;">0.000 s</span>
<span class="t" style="left:1016.5px;top:447.00px;font:normal 11px/14px 'Liberation Sans',sans-serif;color:#000;letter-spacing:-0.131px;">0.000 V</span>
<span class="t" style="left:1097px;top:447.00px;font:normal 11px/14px 'Liberation Sans',sans-serif;color:#000;letter-spacing:-0.203px;">0.000 V</span>
<div class="btn" style="left:1251px;top:413px;width:61px;height:21px;"></div>
<span class="t" style="left:1260px;top:417.00px;font:normal 11px/14px 'Liberation Sans',sans-serif;color:#000;letter-spacing:-0.066px;">Reverse</span>
<div class="btn" style="left:1251px;top:441px;width:61px;height:21px;"></div>
<span class="t" style="left:1268.5px;top:445.00px;font:normal 11px/14px 'Liberation Sans',sans-serif;color:#000;letter-spacing:-0.393px;">Save</span>
<span class="t" style="left:1320.5px;top:453.80px;font:normal 11px/14px 'Liberation Sans',sans-serif;color:#000;letter-spacing:0.235px;">Ext. trigger</span>
<div class="grp" style="left:860px;top:478px;width:131px;height:74px;"></div>
<div style="left:866px;top:473px;width:50.5px;height:12px;background:#f0f0f0;"></div>
<span class="t" style="left:869px;top:472.00px;font:normal 11px/14px 'Liberation Sans',sans-serif;color:#000;letter-spacing:-0.424px;">Timebase</span>
<div class="grp" style="left:992px;top:478px;width:128px;height:74px;"></div>
<div style="left:997.5px;top:473px;width:55px;height:12px;background:#f0f0f0;"></div>
<span class="t" style="left:1000.5px;top:472.00px;font:normal 11px/14px 'Liberation Sans',sans-serif;color:#000;letter-spacing:-0.196px;">Channel A</span>
<div class="grp" style="left:1121px;top:478px;width:129px;height:74px;"></div>
<div style="left:1126.5px;top:473px;width:54px;height:12px;background:#f0f0f0;"></div>
<span class="t" style="left:1129.5px;top:472.00px;font:normal 11px/14px 'Liberation Sans',sans-serif;color:#000;letter-spacing:-0.374px;">Channel B</span>
<div class="grp" style="left:1251px;top:478px;width:129px;height:74px;"></div>
<div style="left:1257px;top:473px;width:39.5px;height:12px;background:#f0f0f0;"></div>
<span class="t" style="left:1260px;top:472.00px;font:normal 11px/14px 'Liberation Sans',sans-serif;color:#000;letter-spacing:-0.133px;">Trigger</span>
<span class="t" style="left:862.5px;top:489.60px;font:normal 11px/14px 'Liberation Sans',sans-serif;color:#000;letter-spacing:-0.345px;">Scale:</span>
<div class="inp" style="left:899px;top:485px;width:87px;height:20px;"></div>
<span class="t" style="left:905.5px;top:487.60px;font:normal 11px/14px 'Liberation Sans',sans-serif;color:#000;letter-spacing:-0.378px;">10 ms/Div</span>
<span class="t" style="left:862.5px;top:509.80px;font:normal 11px/14px 'Liberation Sans',sans-serif;color:#000;letter-spacing:-0.038px;">X pos.(Div):</span>
<div class="inp" style="left:924px;top:506px;width:62px;height:20px;"></div>
<span class="t" style="left:929.5px;top:508.50px;font:normal 11px/14px 'Liberation Sans',sans-serif;color:#000;">0</span>
<div class="btn sel" style="left:868px;top:530px;width:24px;height:18px;"></div>
<span class="t" style="left:871.2px;top:531.30px;font:normal 11px/14px 'Liberation Sans',sans-serif;color:#000;letter-spacing:-0.204px;">Y/T</span>
<div class="btn" style="left:894px;top:530px;width:26px;height:18px;"></div>
<span class="t" style="left:896.6px;top:531.30px;font:normal 11px/14px 'Liberation Sans',sans-serif;color:#000;letter-spacing:-0.191px;">Add</span>
<div class="btn" style="left:924px;top:530px;width:26px;height:18px;"></div>
<span class="t" style="left:927.3px;top:531.30px;font:normal 11px/14px 'Liberation Sans',sans-serif;color:#000;letter-spacing:-0.077px;">B/A</span>
<div class="btn" style="left:952px;top:530px;width:28px;height:18px;"></div>
<span class="t" style="left:956.5px;top:531.30px;font:normal 11px/14px 'Liberation Sans',sans-serif;color:#000;letter-spacing:-0.243px;">A/B</span>
<span class="t" style="left:994.5px;top:489.60px;font:normal 11px/14px 'Liberation Sans',sans-serif;color:#000;letter-spacing:-0.345px;">Scale:</span>
<div class="inp" style="left:1031px;top:485px;width:87px;height:20px;"></div>
<span class="t" style="left:1037.5px;top:487.60px;font:normal 11px/14px 'Liberation Sans',sans-serif;color:#000;letter-spacing:-0.292px;">10  V/Div</span>
<span class="t" style="left:994.5px;top:509.80px;font:normal 11px/14px 'Liberation Sans',sans-serif;color:#000;letter-spacing:-0.021px;">Y pos.(Div):</span>
<div class="inp" style="left:1056px;top:506px;width:62px;height:20px;"></div>
<span class="t" style="left:1061.5px;top:508.50px;font:normal 11px/14px 'Liberation Sans',sans-serif;color:#000;">0</span>
<div class="btn" style="left:996px;top:530px;width:23px;height:18px;"></div>
<span class="t" style="left:999.3px;top:531.30px;font:normal 11px/14px 'Liberation Sans',sans-serif;color:#000;letter-spacing:-0.640px;">AC</span>
<div class="btn" style="left:1021px;top:530px;width:25px;height:18px;"></div>
<span class="t" style="left:1030px;top:531.30px;font:normal 11px/14px 'Liberation Sans',sans-serif;color:#000;">0</span>
<div class="btn sel" style="left:1048px;top:530px;width:25px;height:18px;"></div>
<span class="t" style="left:1052.2px;top:531.30px;font:normal 11px/14px 'Liberation Sans',sans-serif;color:#000;letter-spacing:-0.694px;">DC</span>
<svg class="a" style="left:1099px;top:530px" width="15" height="15" viewBox="0 0 15 15" ><circle cx="7.500" cy="7.500" r="6.200" fill="#f1f1f1" stroke="#c2c2c2" stroke-width="1"/><circle cx="7.500" cy="7.500" r="3.600" fill="#6e6e6e"/></svg>
<span class="t" style="left:1123.5px;top:489.60px;font:normal 11px/14px 'Liberation Sans',sans-serif;color:#000;letter-spacing:-0.345px;">Scale:</span>
<div class="inp" style="left:1161px;top:485px;width:87px;height:20px;"></div>
<span class="t" style="left:1167.3px;top:487.60px;font:normal 11px/14px 'Liberation Sans',sans-serif;color:#000;letter-spacing:-0.292px;">10  V/Div</span>
<span class="t" style="left:1123.5px;top:509.80px;font:normal 11px/14px 'Liberation Sans',sans-serif;color:#000;letter-spacing:-0.021px;">Y pos.(Div):</span>
<div class="inp" style="left:1187px;top:506px;width:61px;height:20px;"></div>
<span class="t" style="left:1192.5px;top:508.50px;font:normal 11px/14px 'Liberation Sans',sans-serif;color:#000;">0</span>
<div class="btn" style="left:1126px;top:532px;width:22px;height:17px;"></div>
<span class="t" style="left:1129px;top:533.30px;font:normal 11px/14px 'Liberation Sans',sans-serif;color:#000;letter-spacing:-0.640px;">AC</span>
<div class="btn" style="left:1150px;top:532px;width:22px;height:17px;"></div>
<span class="t" style="left:1157.5px;top:533.30px;font:normal 11px/14px 'Liberation Sans',sans-serif;color:#000;">0</span>
<div class="btn sel" style="left:1174px;top:532px;width:25px;height:17px;"></div>
<span class="t" style="left:1178.2px;top:533.30px;font:normal 11px/14px 'Liberation Sans',sans-serif;color:#000;letter-spacing:-0.694px;">DC</span>
<div class="btn" style="left:1201px;top:532px;width:18px;height:17px;"></div>
<span class="t" style="left:1208px;top:533.30px;font:normal 11px/14px 'Liberation Sans',sans-serif;color:#000;">-</span>
<svg class="a" style="left:1234px;top:532px" width="15" height="15" viewBox="0 0 15 15" ><circle cx="7.500" cy="7.500" r="6.200" fill="#f1f1f1" stroke="#c2c2c2" stroke-width="1"/><circle cx="7.500" cy="7.500" r="3.600" fill="#6e6e6e"/></svg>
<span class="t" style="left:1255.5px;top:489.60px;font:normal 11px/14px 'Liberation Sans',sans-serif;color:#000;letter-spacing:-0.249px;">Edge:</span>
<div class="btn sel" style="left:1300px;top:490px;width:16px;height:15px;"></div>
<div class="btn" style="left:1318px;top:490px;width:16px;height:15px;"></div>
<div class="btn sel" style="left:1339px;top:490px;width:18px;height:17px;"></div>
<div class="btn" style="left:1359px;top:490px;width:18px;height:17px;"></div>
<svg class="a" style="left:1302px;top:492px" width="12" height="11" viewBox="0 0 12 11" ><path d="M1,9.500H6.500V1.500H11M4,6.500H9" fill="none" stroke="#000" stroke-width="1.100"/></svg>
<svg class="a" style="left:1320px;top:492px" width="12" height="11" viewBox="0 0 12 11" ><path d="M1,1.500H6.500V9.500H11M4,5.500H9" fill="none" stroke="#000" stroke-width="1.100"/></svg>
<span class="t" style="left:1343.5px;top:492.50px;font:normal 11px/14px 'Liberation Sans',sans-serif;color:#000;">A</span>
<span class="t" style="left:1363.5px;top:492.50px;font:normal 11px/14px 'Liberation Sans',sans-serif;color:#a0a0a0;">B</span>
<span class="t" style="left:1255.5px;top:509.80px;font:normal 11px/14px 'Liberation Sans',sans-serif;color:#000;letter-spacing:-0.059px;">Level:</span>
<div class="inp" style="left:1299px;top:510px;width:80px;height:19px;"></div>
<span class="t" style="left:1304.5px;top:512.40px;font:normal 11px/14px 'Liberation Sans',sans-serif;color:#000;">0</span>
<div class="btn" style="left:1257px;top:530px;width:37px;height:18px;"></div>
<span class="t" style="left:1260.5px;top:531.30px;font:normal 11px/14px 'Liberation Sans',sans-serif;color:#000;letter-spacing:-0.430px;">Single</span>
<div class="btn" style="left:1296px;top:530px;width:41px;height:18px;"></div>
<span class="t" style="left:1299.5px;top:531.30px;font:normal 11px/14px 'Liberation Sans',sans-serif;color:#000;letter-spacing:-0.408px;">Normal</span>
<div class="btn" style="left:1339px;top:530px;width:40px;height:18px;"></div>
<span class="t" style="left:1341.8px;top:531.30px;font:normal 11px/14px 'Liberation Sans',sans-serif;color:#000;letter-spacing:0.093px;">Auto</span>
</section>
</div>
</body></html>
